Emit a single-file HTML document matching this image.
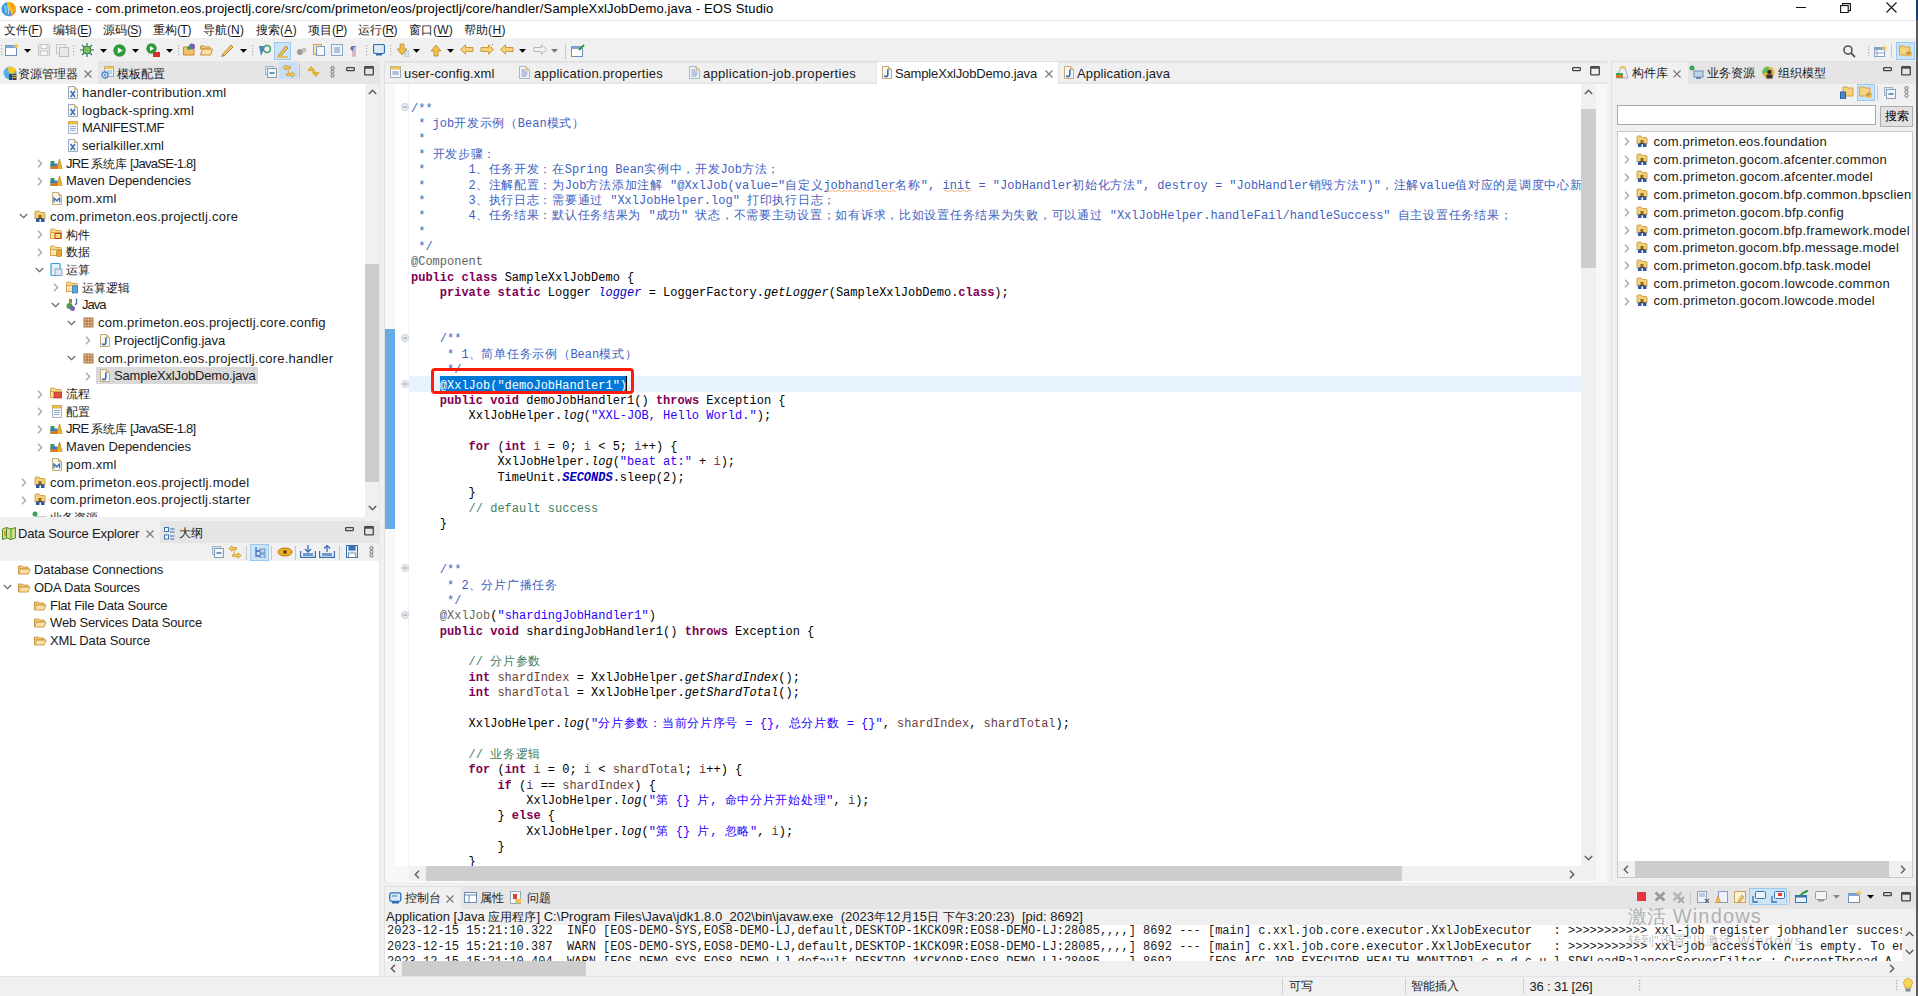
<!DOCTYPE html><html><head><meta charset="utf-8"><style>html,body{margin:0;padding:0;width:1918px;height:996px;overflow:hidden;background:#f0f0f0;font-family:"Liberation Sans",sans-serif}div{position:absolute;box-sizing:border-box}.tx{white-space:pre}.cd{position:absolute;white-space:pre;font-family:"Liberation Mono",monospace;font-size:12px;color:#000}.kw{color:#7f0055;font-weight:bold}.st{color:#2a00ff}.jd{color:#3f5fbf}.cm{color:#3f7f5f}.an{color:#646464}.cj{letter-spacing:0.72px}.lv{color:#6a3e3e}.sf{color:#0000c0;font-style:italic}.it{font-style:italic}</style></head><body><div style="left:0px;top:0px;width:1918px;height:20px;background:#ffffff;"></div><div style="left:0px;top:20px;width:1916px;height:1px;background:#e6e6e6;"></div><div style="left:0px;top:21px;width:1916px;height:17px;background:#ffffff;"></div><svg style="position:absolute;left:1px;top:1px;" width="16" height="16" viewBox="0 0 16 16"><circle cx="8" cy="8" r="7.2" fill="#f7c21c"/><path d="M6 0.9 A7.2 7.2 0 0 0 9.5 15.1 Q11 11.5 8.5 8.5 Q5.5 5 6 0.9Z" fill="#3f9de4"/><path d="M3.5 4.5 Q6 8 5 12 M6.5 5 Q8.5 8.5 7.5 13" stroke="#d8ecfb" stroke-width="0.9" fill="none"/><path d="M8.5 2 Q11 5 12.5 9 M10.5 2.5 Q13 5 14 8" stroke="#f08c10" stroke-width="1.1" fill="none"/><path d="M9.5 15 Q13 13 14.5 9.5" stroke="#f07a30" stroke-width="1.2" fill="none"/></svg><div id="t0" class="tx" style="left:20px;top:0.30px;line-height:17px;font-size:13px;color:#000;font-weight:normal;font-family:'Liberation Sans',sans-serif;letter-spacing:0.153px;">workspace - com.primeton.eos.projectlj.core/src/com/primeton/eos/projectlj/core/handler/SampleXxlJobDemo.java - EOS Studio</div><div style="left:1796px;top:7px;width:10px;height:1.2px;background:#111;"></div><svg style="position:absolute;left:1840px;top:3px;" width="11" height="10" viewBox="0 0 11 10"><rect x="0.6" y="2.6" width="7.6" height="7" fill="none" stroke="#111" stroke-width="1.1"/><path d="M2.6 2.6 V0.6 H10.4 V7.6 H8.2" fill="none" stroke="#111" stroke-width="1.1"/></svg><svg style="position:absolute;left:1886px;top:2px;" width="11" height="11" viewBox="0 0 11 11"><path d="M0.5 0.5 L10.5 10.5 M10.5 0.5 L0.5 10.5" stroke="#111" stroke-width="1.1"/></svg><div style="left:1916px;top:0px;width:2px;height:20px;background:#1c3b6e;"></div><div style="left:1916px;top:20px;width:2px;height:976px;background:#5c5c5c;"></div><div id="t1" class="tx" style="left:4px;top:21.70px;line-height:17px;font-size:12px;color:#1a1a1a;font-weight:normal;font-family:'Liberation Sans',sans-serif;letter-spacing:-0.448px;"><span style="font-size:12px;letter-spacing:0">文件</span>(<u style="text-underline-offset:1.5px;text-decoration-thickness:1px">F</u>)</div><div id="t2" class="tx" style="left:53px;top:21.70px;line-height:17px;font-size:12px;color:#1a1a1a;font-weight:normal;font-family:'Liberation Sans',sans-serif;letter-spacing:-0.672px;"><span style="font-size:12px;letter-spacing:0">编辑</span>(<u style="text-underline-offset:1.5px;text-decoration-thickness:1px">E</u>)</div><div id="t3" class="tx" style="left:103px;top:21.70px;line-height:17px;font-size:12px;color:#1a1a1a;font-weight:normal;font-family:'Liberation Sans',sans-serif;letter-spacing:-0.672px;"><span style="font-size:12px;letter-spacing:0">源码</span>(<u style="text-underline-offset:1.5px;text-decoration-thickness:1px">S</u>)</div><div id="t4" class="tx" style="left:153px;top:21.70px;line-height:17px;font-size:12px;color:#1a1a1a;font-weight:normal;font-family:'Liberation Sans',sans-serif;letter-spacing:-0.448px;"><span style="font-size:12px;letter-spacing:0">重构</span>(<u style="text-underline-offset:1.5px;text-decoration-thickness:1px">T</u>)</div><div id="t5" class="tx" style="left:203px;top:21.70px;line-height:17px;font-size:12px;color:#1a1a1a;font-weight:normal;font-family:'Liberation Sans',sans-serif;letter-spacing:0.109px;"><span style="font-size:12px;letter-spacing:0">导航</span>(<u style="text-underline-offset:1.5px;text-decoration-thickness:1px">N</u>)</div><div id="t6" class="tx" style="left:256px;top:21.70px;line-height:17px;font-size:12px;color:#1a1a1a;font-weight:normal;font-family:'Liberation Sans',sans-serif;letter-spacing:0.328px;"><span style="font-size:12px;letter-spacing:0">搜索</span>(<u style="text-underline-offset:1.5px;text-decoration-thickness:1px">A</u>)</div><div id="t7" class="tx" style="left:308px;top:21.70px;line-height:17px;font-size:12px;color:#1a1a1a;font-weight:normal;font-family:'Liberation Sans',sans-serif;letter-spacing:-0.339px;"><span style="font-size:12px;letter-spacing:0">项目</span>(<u style="text-underline-offset:1.5px;text-decoration-thickness:1px">P</u>)</div><div id="t8" class="tx" style="left:358px;top:21.70px;line-height:17px;font-size:12px;color:#1a1a1a;font-weight:normal;font-family:'Liberation Sans',sans-serif;letter-spacing:-0.557px;"><span style="font-size:12px;letter-spacing:0">运行</span>(<u style="text-underline-offset:1.5px;text-decoration-thickness:1px">R</u>)</div><div id="t9" class="tx" style="left:409px;top:21.70px;line-height:17px;font-size:12px;color:#1a1a1a;font-weight:normal;font-family:'Liberation Sans',sans-serif;letter-spacing:0.224px;"><span style="font-size:12px;letter-spacing:0">窗口</span>(<u style="text-underline-offset:1.5px;text-decoration-thickness:1px">W</u>)</div><div id="t10" class="tx" style="left:464px;top:21.70px;line-height:17px;font-size:12px;color:#1a1a1a;font-weight:normal;font-family:'Liberation Sans',sans-serif;letter-spacing:0.443px;"><span style="font-size:12px;letter-spacing:0">帮助</span>(<u style="text-underline-offset:1.5px;text-decoration-thickness:1px">H</u>)</div><div style="left:0px;top:38px;width:1916px;height:23px;background:#f0f0f0;"></div><div style="left:0;top:1px;width:1918px;height:0"><svg style="position:absolute;left:1px;top:44px;" width="2" height="12" viewBox="0 0 2 12"><rect x="0" y="0" width="1.2" height="1.2" fill="#b0b0b0"/><rect x="0" y="3" width="1.2" height="1.2" fill="#b0b0b0"/><rect x="0" y="6" width="1.2" height="1.2" fill="#b0b0b0"/><rect x="0" y="9" width="1.2" height="1.2" fill="#b0b0b0"/></svg><svg style="position:absolute;left:5px;top:42px;" width="14" height="14" viewBox="0 0 14 14"><rect x="0.5" y="2.5" width="11" height="10" fill="#fff" stroke="#6d8fb8"/><rect x="0.5" y="2.5" width="11" height="2.5" fill="#7fa6d6"/><path d="M11 0 L12 2 L14 3 L12 4 L11 6 L10 4 L8 3 L10 2Z" fill="#f5c242"/></svg><svg style="position:absolute;left:24px;top:47.5px;" width="8" height="4" viewBox="0 0 8 4"><path d="M0 0 H7 L3.5 3.8 Z" fill="#000"/></svg><svg style="position:absolute;left:38px;top:43px;" width="12" height="12" viewBox="0 0 12 12"><rect x="0.5" y="0.5" width="11" height="11" rx="1" fill="#e9e9e9" stroke="#bdbdbd"/><rect x="3" y="0.5" width="6" height="4" fill="#f7f7f7" stroke="#c8c8c8"/><rect x="2.5" y="7" width="7" height="4.5" fill="#f5f5f5" stroke="#c8c8c8"/></svg><svg style="position:absolute;left:56px;top:43px;" width="13" height="13" viewBox="0 0 13 13"><rect x="0.5" y="0.5" width="9" height="9" fill="#eee" stroke="#c8c8c8"/><rect x="3.5" y="3.5" width="9" height="9" fill="#e9e9e9" stroke="#bdbdbd"/></svg><svg style="position:absolute;left:73px;top:44px;" width="2" height="12" viewBox="0 0 2 12"><rect x="0" y="0" width="1.2" height="1.2" fill="#b0b0b0"/><rect x="0" y="3" width="1.2" height="1.2" fill="#b0b0b0"/><rect x="0" y="6" width="1.2" height="1.2" fill="#b0b0b0"/><rect x="0" y="9" width="1.2" height="1.2" fill="#b0b0b0"/></svg><svg style="position:absolute;left:80px;top:42px;" width="14" height="14" viewBox="0 0 14 14"><circle cx="7" cy="7" r="4" fill="#7dbf5e" stroke="#2f7a4a"/><path d="M7 0 V3 M7 11 V14 M0 7 H3 M11 7 H14 M2 2 L4 4 M12 2 L10 4 M2 12 L4 10 M12 12 L10 10" stroke="#2f7a6a" stroke-width="1.2"/></svg><svg style="position:absolute;left:100px;top:47.5px;" width="8" height="4" viewBox="0 0 8 4"><path d="M0 0 H7 L3.5 3.8 Z" fill="#000"/></svg><svg style="position:absolute;left:113px;top:43px;" width="13" height="13" viewBox="0 0 13 13"><circle cx="6.5" cy="6.5" r="6.2" fill="#2e9b3a"/><path d="M4.8 3.5 L9.8 6.5 L4.8 9.5Z" fill="#fff"/></svg><svg style="position:absolute;left:132px;top:47.5px;" width="8" height="4" viewBox="0 0 8 4"><path d="M0 0 H7 L3.5 3.8 Z" fill="#000"/></svg><svg style="position:absolute;left:146px;top:42px;" width="14" height="14" viewBox="0 0 14 14"><circle cx="5.5" cy="5.5" r="5.2" fill="#2e9b3a"/><path d="M4 3 L8 5.5 L4 8Z" fill="#fff"/><rect x="7" y="9" width="7" height="5" fill="#d32f2f"/></svg><svg style="position:absolute;left:166px;top:47.5px;" width="8" height="4" viewBox="0 0 8 4"><path d="M0 0 H7 L3.5 3.8 Z" fill="#000"/></svg><svg style="position:absolute;left:178px;top:44px;" width="2" height="12" viewBox="0 0 2 12"><rect x="0" y="0" width="1.2" height="1.2" fill="#b0b0b0"/><rect x="0" y="3" width="1.2" height="1.2" fill="#b0b0b0"/><rect x="0" y="6" width="1.2" height="1.2" fill="#b0b0b0"/><rect x="0" y="9" width="1.2" height="1.2" fill="#b0b0b0"/></svg><svg style="position:absolute;left:183px;top:42px;" width="14" height="13" viewBox="0 0 14 13"><path d="M0.5 4 H5 L6 5 H11 V12 H0.5Z" fill="#f4c06a" stroke="#c98a2a"/><circle cx="9" cy="3.5" r="3" fill="#7a5fb0"/><circle cx="6" cy="5" r="2" fill="#3aa060"/></svg><svg style="position:absolute;left:200px;top:43px;" width="13" height="12" viewBox="0 0 13 12"><path d="M0.5 2 H4.5 L5.5 3 H10 V5 H0.5Z" fill="#f4c878" stroke="#c9913a"/><path d="M0.5 11 L2.5 5 H12.5 L10.5 11Z" fill="#fbe0a6" stroke="#c9913a"/></svg><svg style="position:absolute;left:220px;top:42px;" width="15" height="14" viewBox="0 0 15 14"><path d="M2 12 L11 2 L13 4 L4 13Z" fill="#f3c56a" stroke="#b8862a"/><path d="M2 12 L1 14 L4 13Z" fill="#777"/></svg><svg style="position:absolute;left:240px;top:47.5px;" width="8" height="4" viewBox="0 0 8 4"><path d="M0 0 H7 L3.5 3.8 Z" fill="#000"/></svg><svg style="position:absolute;left:252px;top:44px;" width="2" height="12" viewBox="0 0 2 12"><rect x="0" y="0" width="1.2" height="1.2" fill="#b0b0b0"/><rect x="0" y="3" width="1.2" height="1.2" fill="#b0b0b0"/><rect x="0" y="6" width="1.2" height="1.2" fill="#b0b0b0"/><rect x="0" y="9" width="1.2" height="1.2" fill="#b0b0b0"/></svg><svg style="position:absolute;left:258px;top:42px;" width="13" height="14" viewBox="0 0 13 14"><path d="M1 3 H7 L3 13Z" fill="#4f7fbf"/><circle cx="9" cy="6" r="3.5" fill="none" stroke="#3aa060" stroke-width="1.6"/></svg><div style="left:274px;top:41px;width:17px;height:18px;background:#cce4f7;border:1px solid #99c9ef"></div><svg style="position:absolute;left:276px;top:43px;" width="13" height="14" viewBox="0 0 13 14"><path d="M2 12 L10 2 L12 4 L4 13Z" fill="#f3c56a" stroke="#b8862a"/><path d="M1 13 H12" stroke="#f3b33a" stroke-width="1.5"/></svg><svg style="position:absolute;left:296px;top:45px;" width="11" height="10" viewBox="0 0 11 10"><circle cx="4" cy="6" r="3" fill="#9a9a9a"/><circle cx="8" cy="4" r="2.5" fill="#c0c0c0"/></svg><svg style="position:absolute;left:313px;top:43px;" width="12" height="12" viewBox="0 0 12 12"><rect x="0.5" y="0.5" width="8" height="10" fill="#fbe6a8" stroke="#c9a15a"/><rect x="3.5" y="2.5" width="8" height="9" fill="#f7f7f7" stroke="#7a9cc6"/></svg><svg style="position:absolute;left:331px;top:43px;" width="12" height="12" viewBox="0 0 12 12"><rect x="0.5" y="0.5" width="11" height="11" fill="#eef3fa" stroke="#8aa5c8"/><path d="M3 4 H9 M3 6 H9 M3 8 H9" stroke="#7a8fb0"/></svg><div id="t11" class="tx" style="left:350px;top:41.50px;line-height:17px;font-size:12px;color:#4a6fa8;font-weight:normal;font-family:'Liberation Sans',sans-serif;">¶</div><svg style="position:absolute;left:366px;top:44px;" width="2" height="12" viewBox="0 0 2 12"><rect x="0" y="0" width="1.2" height="1.2" fill="#b0b0b0"/><rect x="0" y="3" width="1.2" height="1.2" fill="#b0b0b0"/><rect x="0" y="6" width="1.2" height="1.2" fill="#b0b0b0"/><rect x="0" y="9" width="1.2" height="1.2" fill="#b0b0b0"/></svg><svg style="position:absolute;left:373px;top:43px;" width="12" height="12" viewBox="0 0 12 12"><rect x="0.5" y="0.5" width="11" height="9" rx="1.5" fill="#dbe9f7" stroke="#2f6db3" stroke-width="1.2"/><rect x="3" y="10" width="6" height="1.5" fill="#2f6db3"/></svg><svg style="position:absolute;left:390px;top:44px;" width="2" height="12" viewBox="0 0 2 12"><rect x="0" y="0" width="1.2" height="1.2" fill="#b0b0b0"/><rect x="0" y="3" width="1.2" height="1.2" fill="#b0b0b0"/><rect x="0" y="6" width="1.2" height="1.2" fill="#b0b0b0"/><rect x="0" y="9" width="1.2" height="1.2" fill="#b0b0b0"/></svg><svg style="position:absolute;left:396px;top:42px;" width="13" height="14" viewBox="0 0 13 14"><path d="M4 1 H8 V6 H11 L6 12 L1 6 H4Z" fill="#f3c04a" stroke="#b8862a" stroke-width="0.8"/><rect x="9" y="8" width="4" height="6" fill="#dfe6ef" stroke="#8aa0c0" stroke-width="0.6"/></svg><svg style="position:absolute;left:413px;top:47.5px;" width="8" height="4" viewBox="0 0 8 4"><path d="M0 0 H7 L3.5 3.8 Z" fill="#000"/></svg><svg style="position:absolute;left:430px;top:42px;" width="12" height="14" viewBox="0 0 12 14"><path d="M4 13 H8 V8 H11 L6 2 L1 8 H4Z" fill="#f3c04a" stroke="#b8862a" stroke-width="0.8"/></svg><svg style="position:absolute;left:447px;top:47.5px;" width="8" height="4" viewBox="0 0 8 4"><path d="M0 0 H7 L3.5 3.8 Z" fill="#000"/></svg><svg style="position:absolute;left:460px;top:43px;" width="14" height="11" viewBox="0 0 14 11"><path d="M0.5 5.5 L5.5 0.8 V3.5 H13 V7.5 H5.5 V10.2Z" fill="#f7d27a" stroke="#c99a3a"/></svg><svg style="position:absolute;left:480px;top:43px;" width="14" height="11" viewBox="0 0 14 11"><path d="M13.5 5.5 L8.5 0.8 V3.5 H1 V7.5 H8.5 V10.2Z" fill="#f7d27a" stroke="#c99a3a"/><path d="M12 0 L13 1" stroke="#666"/></svg><svg style="position:absolute;left:500px;top:43px;" width="14" height="11" viewBox="0 0 14 11"><path d="M0.5 5.5 L5.5 0.8 V3.5 H13 V7.5 H5.5 V10.2Z" fill="#f7d27a" stroke="#c99a3a"/></svg><svg style="position:absolute;left:519px;top:47.5px;" width="8" height="4" viewBox="0 0 8 4"><path d="M0 0 H7 L3.5 3.8 Z" fill="#000"/></svg><svg style="position:absolute;left:533px;top:43px;" width="14" height="11" viewBox="0 0 14 11"><path d="M13.5 5.5 L8.5 0.8 V3.5 H1 V7.5 H8.5 V10.2Z" fill="#f3f3f3" stroke="#b5b5b5"/></svg><svg style="position:absolute;left:551px;top:47.5px;" width="8" height="4" viewBox="0 0 8 4"><path d="M0 0 H7 L3.5 3.8 Z" fill="#777"/></svg><div style="left:565px;top:43px;width:1px;height:15px;background:#c8c8c8;"></div><svg style="position:absolute;left:571px;top:43px;" width="14" height="13" viewBox="0 0 14 13"><rect x="0.5" y="2.5" width="11" height="10" fill="#fff" stroke="#6d8fb8"/><rect x="0.5" y="2.5" width="11" height="2.5" fill="#7fa6d6"/><path d="M8 6 L13 1" stroke="#2e9b3a" stroke-width="2"/></svg><svg style="position:absolute;left:1843px;top:44px;" width="13" height="13" viewBox="0 0 13 13"><circle cx="5" cy="5" r="4" fill="none" stroke="#555" stroke-width="1.6"/><path d="M8 8 L12 12" stroke="#555" stroke-width="1.8"/></svg><svg style="position:absolute;left:1868px;top:45px;" width="2" height="12" viewBox="0 0 2 12"><rect x="0" y="0" width="1.2" height="1.2" fill="#b0b0b0"/><rect x="0" y="3" width="1.2" height="1.2" fill="#b0b0b0"/><rect x="0" y="6" width="1.2" height="1.2" fill="#b0b0b0"/><rect x="0" y="9" width="1.2" height="1.2" fill="#b0b0b0"/></svg><svg style="position:absolute;left:1874px;top:44px;" width="13" height="12" viewBox="0 0 13 12"><rect x="0.5" y="2.5" width="10" height="9" fill="#fff" stroke="#8aa0c0"/><rect x="0.5" y="2.5" width="10" height="2.5" fill="#7fa6d6"/><path d="M3 5 V11.5 M0.5 8 H10.5" stroke="#8aa0c0"/><path d="M10 0 L11 2 L13 3 L11 4 L10 6 L9 4 L7 3 L9 2Z" fill="#f5c242"/></svg><div style="left:1891px;top:43px;width:1px;height:14px;background:#c8c8c8;"></div><div style="left:1896px;top:41px;width:19px;height:18px;background:#cce4f7;border:1px solid #99c9ef"></div><svg style="position:absolute;left:1899px;top:43px;" width="14" height="13" viewBox="0 0 14 13"><path d="M0.5 2 H5 L6 3 H11 V11 H0.5Z" fill="#f7d27a" stroke="#d0a04a"/><circle cx="10" cy="9.5" r="3" fill="#f3b33a"/><path d="M8 10 Q9 8 11 9" stroke="#3a8ad8" stroke-width="1.2" fill="none"/></svg></div><div style="left:0px;top:61px;width:1916px;height:915px;background:#f0f0f0;"></div><div style="left:0px;top:61px;width:380px;height:456px;background:#ffffff;"></div><div style="left:0px;top:61px;width:380px;height:23px;background:#e5e5e5;"></div><div style="left:0px;top:61px;width:98px;height:23px;background:#f0f0f0;"></div><svg style="position:absolute;left:2px;top:65px;" width="15" height="15" viewBox="0 0 15 15"><circle cx="8" cy="8" r="6.5" fill="#5aaee8"/><path d="M6 2 Q11 1 14 5 Q13 9 9 9 Q6 8 6 2Z" fill="#f8c81a"/><rect x="7" y="9" width="3" height="6" fill="#2a4a7a"/><rect x="10.5" y="9" width="4" height="6" fill="#3a3a3a"/><path d="M10.5 10.5 H14.5 M10.5 12.5 H14.5" stroke="#f2d24c" stroke-width="0.9"/></svg><div id="t12" class="tx" style="left:18px;top:65.50px;line-height:17px;font-size:12px;color:#1a1a1a;font-weight:normal;font-family:'Liberation Sans',sans-serif;"><span style="font-size:12px;letter-spacing:0">资源管理器</span></div><svg style="position:absolute;left:84px;top:70.0px;" width="8" height="8" viewBox="0 0 8 8"><path d="M0.5 0.5 L7.5 7.5 M7.5 0.5 L0.5 7.5" stroke="#7a7a7a" stroke-width="1.2"/></svg><svg style="position:absolute;left:101px;top:66px;" width="13" height="13" viewBox="0 0 13 13"><rect x="3.5" y="0.5" width="9" height="10" fill="#e8f3fb" stroke="#9aa8b8"/><rect x="3.5" y="0.5" width="9" height="2.5" fill="#f2c24c"/><path d="M6 5 H11 M6 7 H11" stroke="#8fb0d0"/><circle cx="4" cy="9" r="3" fill="#cfe2f5" stroke="#4a86c8" stroke-width="1.3"/><circle cx="4" cy="9" r="1" fill="#4a86c8"/></svg><div id="t13" class="tx" style="left:117px;top:65.50px;line-height:17px;font-size:12px;color:#1a1a1a;font-weight:normal;font-family:'Liberation Sans',sans-serif;"><span style="font-size:12px;letter-spacing:0">模板配置</span></div><svg style="position:absolute;left:265px;top:66px;" width="12" height="12" viewBox="0 0 12 12"><rect x="0.5" y="0.5" width="8" height="8" fill="#dce8f4" stroke="#9fb3cc" stroke-width="1"/><rect x="2.5" y="2.5" width="9" height="9" fill="#eef6fc" stroke="#8d9bb0" stroke-width="1"/><path d="M4.5 7 H9.5" stroke="#4f7fb0" stroke-width="1.6"/></svg><div style="left:279px;top:62px;width:19px;height:17px;background:#c5e0f8;"></div><svg style="position:absolute;left:282px;top:64px;" width="14" height="14" viewBox="0 0 14 14"><path d="M0.8 3.5 L4 0.8 V2.5 H8.5 V4.5 H4 V6.2Z" fill="#f6c86a" stroke="#d39a2a" stroke-width="0.8"/><path d="M13.2 10.5 L10 7.8 V9.5 H4.5 V11.5 H10 V13.2Z" fill="#f6c86a" stroke="#d39a2a" stroke-width="0.8"/><path d="M6 4.5 L6.5 9.5" stroke="#e0a840" stroke-width="1"/></svg><div style="left:299px;top:64px;width:1px;height:14px;background:#c0c0c0;"></div><svg style="position:absolute;left:307px;top:65px;" width="13" height="13" viewBox="0 0 13 13"><path d="M0.8 5.5 L4 1.5 L6.5 4 L5 5.5 Z" fill="#f3c44a" stroke="#c99a20" stroke-width="0.7"/><path d="M3.5 3 L8 6.5" stroke="#e3b030" stroke-width="2"/><path d="M12.2 7.5 L9 11.5 L6.5 9 L8 7.5 Z" fill="#f3c44a" stroke="#c99a20" stroke-width="0.7"/><path d="M9.5 10 L5 6.5" stroke="#e3b030" stroke-width="2"/></svg><svg style="position:absolute;left:330px;top:66px;" width="5" height="12" viewBox="0 0 5 12"><circle cx="2.5" cy="2.0" r="1.6" fill="none" stroke="#6a6a6a" stroke-width="0.9"/><circle cx="2.5" cy="5.8" r="1.6" fill="none" stroke="#6a6a6a" stroke-width="0.9"/><circle cx="2.5" cy="9.6" r="1.6" fill="none" stroke="#6a6a6a" stroke-width="0.9"/></svg><svg style="position:absolute;left:346px;top:67px;" width="9" height="5" viewBox="0 0 9 5"><rect x="0.7" y="0.7" width="7.6" height="3" rx="0.6" fill="none" stroke="#444" stroke-width="1.3"/></svg><svg style="position:absolute;left:364px;top:66px;" width="10" height="10" viewBox="0 0 10 10"><rect x="0.7" y="0.7" width="8.6" height="8.2" rx="0.6" fill="none" stroke="#444" stroke-width="1.3"/><path d="M0.8 1.9 H9.2" stroke="#444" stroke-width="1.6"/></svg><div style="left:96px;top:367px;width:162px;height:17px;background:#d9d9d9;"></div><svg style="position:absolute;left:67px;top:85.8px;" width="12" height="13" viewBox="0 0 12 13"><path d="M1.5 0.5 H7.5 L10.5 3.5 V12.5 H1.5 Z" fill="#f4f7fb" stroke="#9aa8b8" stroke-width="1"/><path d="M7.5 0.5 V3.5 H10.5" fill="#e8c27a" stroke="#c9a15a" stroke-width="0.8"/><path d="M3.6 5 L8 11 M8 5 L3.6 11" stroke="#3a6fb0" stroke-width="1.5"/></svg><div id="t14" class="tx" style="left:82px;top:83.80px;line-height:17px;font-size:13px;color:#1a1a1a;font-weight:normal;font-family:'Liberation Sans',sans-serif;letter-spacing:0.240px;">handler-contribution.xml</div><svg style="position:absolute;left:67px;top:103.52px;" width="12" height="13" viewBox="0 0 12 13"><path d="M1.5 0.5 H7.5 L10.5 3.5 V12.5 H1.5 Z" fill="#f4f7fb" stroke="#9aa8b8" stroke-width="1"/><path d="M7.5 0.5 V3.5 H10.5" fill="#e8c27a" stroke="#c9a15a" stroke-width="0.8"/><path d="M3.6 5 L8 11 M8 5 L3.6 11" stroke="#3a6fb0" stroke-width="1.5"/></svg><div id="t15" class="tx" style="left:82px;top:101.52px;line-height:17px;font-size:13px;color:#1a1a1a;font-weight:normal;font-family:'Liberation Sans',sans-serif;letter-spacing:0.201px;">logback-spring.xml</div><svg style="position:absolute;left:67px;top:121.24px;" width="12" height="13" viewBox="0 0 12 13"><rect x="1.5" y="0.5" width="9" height="12" fill="#f4f7fb" stroke="#a8b4c4"/><rect x="1.5" y="0.5" width="9" height="2.5" fill="#f2c24c" stroke="#d0a030" stroke-width="0.6"/><path d="M3 5.5 H9 M3 7.5 H9 M3 9.5 H8" stroke="#8aa0c0" stroke-width="0.9"/></svg><div id="t16" class="tx" style="left:82px;top:119.24px;line-height:17px;font-size:13px;color:#1a1a1a;font-weight:normal;font-family:'Liberation Sans',sans-serif;letter-spacing:-0.425px;">MANIFEST.MF</div><svg style="position:absolute;left:67px;top:138.95999999999998px;" width="12" height="13" viewBox="0 0 12 13"><path d="M1.5 0.5 H7.5 L10.5 3.5 V12.5 H1.5 Z" fill="#f4f7fb" stroke="#9aa8b8" stroke-width="1"/><path d="M7.5 0.5 V3.5 H10.5" fill="#e8c27a" stroke="#c9a15a" stroke-width="0.8"/><path d="M3.6 5 L8 11 M8 5 L3.6 11" stroke="#3a6fb0" stroke-width="1.5"/></svg><div id="t17" class="tx" style="left:82px;top:136.96px;line-height:17px;font-size:13px;color:#1a1a1a;font-weight:normal;font-family:'Liberation Sans',sans-serif;letter-spacing:0.068px;">serialkiller.xml</div><svg style="position:absolute;left:37.3px;top:159.18px;" width="6" height="9" viewBox="0 0 6 9"><path d="M1 0.8 L4.6 4.5 L1 8.2" stroke="#a6a6a6" stroke-width="1.3" fill="none"/></svg><svg style="position:absolute;left:50px;top:157.68px;" width="13" height="12" viewBox="0 0 13 12"><rect x="0.5" y="3" width="4" height="8" fill="#3a9a5a"/><rect x="0.5" y="8" width="8" height="3" fill="#d07a2a"/><rect x="0.5" y="5.5" width="7" height="2.5" fill="#3a7ab8"/><path d="M7 11 L9.5 1 L12 11" fill="#f0b030" stroke="#c08010" stroke-width="0.8"/></svg><div id="t18" class="tx" style="left:66px;top:154.68px;line-height:17px;font-size:13px;color:#1a1a1a;font-weight:normal;font-family:'Liberation Sans',sans-serif;letter-spacing:-0.754px;">JRE <span style="font-size:12px;letter-spacing:0">系统库</span> [JavaSE-1.8]</div><svg style="position:absolute;left:37.3px;top:176.89999999999998px;" width="6" height="9" viewBox="0 0 6 9"><path d="M1 0.8 L4.6 4.5 L1 8.2" stroke="#a6a6a6" stroke-width="1.3" fill="none"/></svg><svg style="position:absolute;left:50px;top:175.39999999999998px;" width="13" height="12" viewBox="0 0 13 12"><rect x="0.5" y="3" width="4" height="8" fill="#3a9a5a"/><rect x="0.5" y="8" width="8" height="3" fill="#d07a2a"/><rect x="0.5" y="5.5" width="7" height="2.5" fill="#3a7ab8"/><path d="M7 11 L9.5 1 L12 11" fill="#f0b030" stroke="#c08010" stroke-width="0.8"/></svg><div id="t19" class="tx" style="left:66px;top:172.40px;line-height:17px;font-size:13px;color:#1a1a1a;font-weight:normal;font-family:'Liberation Sans',sans-serif;letter-spacing:-0.042px;">Maven Dependencies</div><svg style="position:absolute;left:51px;top:192.12px;" width="12" height="13" viewBox="0 0 12 13"><path d="M1.5 0.5 H7.5 L10.5 3.5 V12.5 H1.5 Z" fill="#f4f7fb" stroke="#c4ab74" stroke-width="1"/><path d="M7.5 0.5 V3.5 H10.5" fill="#e8c27a" stroke="#c9a15a" stroke-width="0.8"/><path d="M3 10.5 V6 L5.8 8.8 L8.6 6 V10.5" stroke="#3a6fb0" stroke-width="1.3" fill="none"/></svg><div id="t20" class="tx" style="left:66px;top:190.12px;line-height:17px;font-size:13px;color:#1a1a1a;font-weight:normal;font-family:'Liberation Sans',sans-serif;letter-spacing:0.225px;">pom.xml</div><svg style="position:absolute;left:19px;top:213.33999999999997px;" width="9" height="6" viewBox="0 0 9 6"><path d="M0.8 1 L4.5 4.6 L8.2 1" stroke="#6a6a6a" stroke-width="1.3" fill="none"/></svg><svg style="position:absolute;left:34px;top:209.83999999999997px;" width="13" height="13" viewBox="0 0 13 13"><path d="M1 2 Q1 1 2 1 H5 L6.5 2.5 H10 Q11 2.5 11 3.5 V9 H1 Z" fill="#f3cf7a" stroke="#c99a3e" stroke-width="0.9"/><rect x="4.5" y="5" width="3" height="3" fill="#8c6a2a"/><rect x="2" y="8.5" width="3.5" height="3.5" fill="#3056a8"/><rect x="7" y="8.5" width="3.5" height="3.5" fill="#3056a8"/><path d="M6 8 V9 M3.7 8.5 H8.7" stroke="#3a3a3a" stroke-width="0.8"/></svg><div id="t21" class="tx" style="left:50px;top:207.84px;line-height:17px;font-size:13px;color:#1a1a1a;font-weight:normal;font-family:'Liberation Sans',sans-serif;letter-spacing:0.244px;">com.primeton.eos.projectlj.core</div><svg style="position:absolute;left:37.3px;top:230.06px;" width="6" height="9" viewBox="0 0 6 9"><path d="M1 0.8 L4.6 4.5 L1 8.2" stroke="#a6a6a6" stroke-width="1.3" fill="none"/></svg><svg style="position:absolute;left:50px;top:227.56px;" width="13" height="13" viewBox="0 0 13 13"><path d="M0.5 2 Q0.5 1 1.5 1 H4.5 L5.8 2.5 H10.5 Q11.5 2.5 11.5 3.5 V10.5 H0.5 Z" fill="#f6d88b" stroke="#d0a04a" stroke-width="0.9"/><path d="M0.5 4.5 H11.5 V10.5 H0.5 Z" fill="#fbe6a8" stroke="#d0a04a" stroke-width="0.9"/><rect x="5" y="5.5" width="6" height="5" fill="#f5e36a" stroke="#c0392b" stroke-width="1"/></svg><div id="t22" class="tx" style="left:66px;top:225.56px;line-height:17px;font-size:13px;color:#1a1a1a;font-weight:normal;font-family:'Liberation Sans',sans-serif;"><span style="font-size:12px;letter-spacing:0">构件</span></div><svg style="position:absolute;left:37.3px;top:247.77999999999997px;" width="6" height="9" viewBox="0 0 6 9"><path d="M1 0.8 L4.6 4.5 L1 8.2" stroke="#a6a6a6" stroke-width="1.3" fill="none"/></svg><svg style="position:absolute;left:50px;top:245.27999999999997px;" width="13" height="13" viewBox="0 0 13 13"><path d="M0.5 2 Q0.5 1 1.5 1 H4.5 L5.8 2.5 H10.5 Q11.5 2.5 11.5 3.5 V10.5 H0.5 Z" fill="#f6d88b" stroke="#d0a04a" stroke-width="0.9"/><path d="M0.5 4.5 H11.5 V10.5 H0.5 Z" fill="#fbe6a8" stroke="#d0a04a" stroke-width="0.9"/><rect x="6.5" y="5.5" width="5" height="6" rx="1" fill="#e3a82b" stroke="#b07a10" stroke-width="0.7"/></svg><div id="t23" class="tx" style="left:66px;top:243.28px;line-height:17px;font-size:13px;color:#1a1a1a;font-weight:normal;font-family:'Liberation Sans',sans-serif;"><span style="font-size:12px;letter-spacing:0">数据</span></div><svg style="position:absolute;left:35px;top:266.5px;" width="9" height="6" viewBox="0 0 9 6"><path d="M0.8 1 L4.5 4.6 L8.2 1" stroke="#6a6a6a" stroke-width="1.3" fill="none"/></svg><svg style="position:absolute;left:50px;top:263.0px;" width="13" height="13" viewBox="0 0 13 13"><rect x="1" y="0.5" width="9" height="12" rx="1" fill="#e3f1fb" stroke="#3aa0d8" stroke-width="1.2"/><rect x="5" y="6" width="7" height="6.5" fill="#dfe6ef" stroke="#6b88b0" stroke-width="0.7"/></svg><div id="t24" class="tx" style="left:66px;top:261.00px;line-height:17px;font-size:13px;color:#1a1a1a;font-weight:normal;font-family:'Liberation Sans',sans-serif;"><span style="font-size:12px;letter-spacing:0">运算</span></div><svg style="position:absolute;left:53.3px;top:283.21999999999997px;" width="6" height="9" viewBox="0 0 6 9"><path d="M1 0.8 L4.6 4.5 L1 8.2" stroke="#a6a6a6" stroke-width="1.3" fill="none"/></svg><svg style="position:absolute;left:66px;top:280.71999999999997px;" width="13" height="13" viewBox="0 0 13 13"><path d="M0.5 2 Q0.5 1 1.5 1 H4.5 L5.8 2.5 H10.5 Q11.5 2.5 11.5 3.5 V10.5 H0.5 Z" fill="#f6d88b" stroke="#d0a04a" stroke-width="0.9"/><path d="M0.5 4.5 H11.5 V10.5 H0.5 Z" fill="#fbe6a8" stroke="#d0a04a" stroke-width="0.9"/><rect x="6.5" y="5" width="5" height="7" fill="#5aa7e8" stroke="#2f6fb3" stroke-width="0.7"/></svg><div id="t25" class="tx" style="left:82px;top:278.72px;line-height:17px;font-size:13px;color:#1a1a1a;font-weight:normal;font-family:'Liberation Sans',sans-serif;"><span style="font-size:12px;letter-spacing:0">运算逻辑</span></div><svg style="position:absolute;left:51px;top:301.94px;" width="9" height="6" viewBox="0 0 9 6"><path d="M0.8 1 L4.5 4.6 L8.2 1" stroke="#6a6a6a" stroke-width="1.3" fill="none"/></svg><svg style="position:absolute;left:66px;top:298.44px;" width="13" height="13" viewBox="0 0 13 13"><circle cx="3.5" cy="8" r="3" fill="#4f9a4a"/><circle cx="6.5" cy="10.5" r="2.5" fill="#7a5fb0"/><rect x="3" y="1" width="3" height="4" fill="#b07a4a"/><path d="M10.5 0.5 V5 Q10.5 6.5 9 6.5" stroke="#3a6fb0" stroke-width="1.3" fill="none"/></svg><div id="t26" class="tx" style="left:82px;top:296.44px;line-height:17px;font-size:13px;color:#1a1a1a;font-weight:normal;font-family:'Liberation Sans',sans-serif;letter-spacing:-0.992px;">Java</div><svg style="position:absolute;left:67px;top:319.65999999999997px;" width="9" height="6" viewBox="0 0 9 6"><path d="M0.8 1 L4.5 4.6 L8.2 1" stroke="#6a6a6a" stroke-width="1.3" fill="none"/></svg><svg style="position:absolute;left:83px;top:317.15999999999997px;" width="11" height="11" viewBox="0 0 11 11"><rect x="1" y="1" width="9" height="9" fill="#e9c59a" stroke="#a0683a" stroke-width="0.9"/><path d="M4 1 V10 M7 1 V10 M1 4 H10 M1 7 H10" stroke="#a0683a" stroke-width="0.9"/></svg><div id="t27" class="tx" style="left:98px;top:314.16px;line-height:17px;font-size:13px;color:#1a1a1a;font-weight:normal;font-family:'Liberation Sans',sans-serif;letter-spacing:0.233px;">com.primeton.eos.projectlj.core.config</div><svg style="position:absolute;left:85.3px;top:336.38px;" width="6" height="9" viewBox="0 0 6 9"><path d="M1 0.8 L4.6 4.5 L1 8.2" stroke="#a6a6a6" stroke-width="1.3" fill="none"/></svg><svg style="position:absolute;left:99px;top:333.88px;" width="12" height="13" viewBox="0 0 12 13"><path d="M1.5 0.5 H7.5 L10.5 3.5 V12.5 H1.5 Z" fill="#f4f7fb" stroke="#c4ab74" stroke-width="1"/><path d="M7.5 0.5 V3.5 H10.5" fill="#e8c27a" stroke="#c9a15a" stroke-width="0.8"/><path d="M6.8 3.5 V8.5 Q6.8 10.6 4.8 10.6 Q3.6 10.6 3.3 9.6" stroke="#3a6fb0" stroke-width="1.6" fill="none"/></svg><div id="t28" class="tx" style="left:114px;top:331.88px;line-height:17px;font-size:13px;color:#1a1a1a;font-weight:normal;font-family:'Liberation Sans',sans-serif;letter-spacing:0.001px;">ProjectljConfig.java</div><svg style="position:absolute;left:67px;top:355.09999999999997px;" width="9" height="6" viewBox="0 0 9 6"><path d="M0.8 1 L4.5 4.6 L8.2 1" stroke="#6a6a6a" stroke-width="1.3" fill="none"/></svg><svg style="position:absolute;left:83px;top:352.59999999999997px;" width="11" height="11" viewBox="0 0 11 11"><rect x="1" y="1" width="9" height="9" fill="#e9c59a" stroke="#a0683a" stroke-width="0.9"/><path d="M4 1 V10 M7 1 V10 M1 4 H10 M1 7 H10" stroke="#a0683a" stroke-width="0.9"/></svg><div id="t29" class="tx" style="left:98px;top:349.60px;line-height:17px;font-size:13px;color:#1a1a1a;font-weight:normal;font-family:'Liberation Sans',sans-serif;letter-spacing:0.197px;">com.primeton.eos.projectlj.core.handler</div><svg style="position:absolute;left:85.3px;top:371.82px;" width="6" height="9" viewBox="0 0 6 9"><path d="M1 0.8 L4.6 4.5 L1 8.2" stroke="#a6a6a6" stroke-width="1.3" fill="none"/></svg><svg style="position:absolute;left:99px;top:369.32px;" width="12" height="13" viewBox="0 0 12 13"><path d="M1.5 0.5 H7.5 L10.5 3.5 V12.5 H1.5 Z" fill="#f4f7fb" stroke="#c4ab74" stroke-width="1"/><path d="M7.5 0.5 V3.5 H10.5" fill="#e8c27a" stroke="#c9a15a" stroke-width="0.8"/><path d="M6.8 3.5 V8.5 Q6.8 10.6 4.8 10.6 Q3.6 10.6 3.3 9.6" stroke="#3a6fb0" stroke-width="1.6" fill="none"/></svg><div id="t30" class="tx" style="left:114px;top:367.32px;line-height:17px;font-size:13px;color:#1a1a1a;font-weight:normal;font-family:'Liberation Sans',sans-serif;letter-spacing:-0.173px;">SampleXxlJobDemo.java</div><svg style="position:absolute;left:37.3px;top:389.54px;" width="6" height="9" viewBox="0 0 6 9"><path d="M1 0.8 L4.6 4.5 L1 8.2" stroke="#a6a6a6" stroke-width="1.3" fill="none"/></svg><svg style="position:absolute;left:50px;top:387.04px;" width="13" height="13" viewBox="0 0 13 13"><path d="M0.5 2 Q0.5 1 1.5 1 H4.5 L5.8 2.5 H10.5 Q11.5 2.5 11.5 3.5 V10.5 H0.5 Z" fill="#f6d88b" stroke="#d0a04a" stroke-width="0.9"/><path d="M0.5 4.5 H11.5 V10.5 H0.5 Z" fill="#fbe6a8" stroke="#d0a04a" stroke-width="0.9"/><rect x="4" y="5.5" width="7.5" height="5.5" fill="#e74c3c" stroke="#a93226" stroke-width="0.7"/></svg><div id="t31" class="tx" style="left:66px;top:385.04px;line-height:17px;font-size:13px;color:#1a1a1a;font-weight:normal;font-family:'Liberation Sans',sans-serif;"><span style="font-size:12px;letter-spacing:0">流程</span></div><svg style="position:absolute;left:37.3px;top:407.26px;" width="6" height="9" viewBox="0 0 6 9"><path d="M1 0.8 L4.6 4.5 L1 8.2" stroke="#a6a6a6" stroke-width="1.3" fill="none"/></svg><svg style="position:absolute;left:51px;top:404.76px;" width="12" height="13" viewBox="0 0 12 13"><rect x="1.5" y="0.5" width="9" height="12" fill="#f4f7fb" stroke="#a8b4c4"/><rect x="1.5" y="0.5" width="9" height="2.5" fill="#f2c24c" stroke="#d0a030" stroke-width="0.6"/><path d="M3 5.5 H9 M3 7.5 H9 M3 9.5 H8" stroke="#8aa0c0" stroke-width="0.9"/></svg><div id="t32" class="tx" style="left:66px;top:402.76px;line-height:17px;font-size:13px;color:#1a1a1a;font-weight:normal;font-family:'Liberation Sans',sans-serif;"><span style="font-size:12px;letter-spacing:0">配置</span></div><svg style="position:absolute;left:37.3px;top:424.97999999999996px;" width="6" height="9" viewBox="0 0 6 9"><path d="M1 0.8 L4.6 4.5 L1 8.2" stroke="#a6a6a6" stroke-width="1.3" fill="none"/></svg><svg style="position:absolute;left:50px;top:423.47999999999996px;" width="13" height="12" viewBox="0 0 13 12"><rect x="0.5" y="3" width="4" height="8" fill="#3a9a5a"/><rect x="0.5" y="8" width="8" height="3" fill="#d07a2a"/><rect x="0.5" y="5.5" width="7" height="2.5" fill="#3a7ab8"/><path d="M7 11 L9.5 1 L12 11" fill="#f0b030" stroke="#c08010" stroke-width="0.8"/></svg><div id="t33" class="tx" style="left:66px;top:420.48px;line-height:17px;font-size:13px;color:#1a1a1a;font-weight:normal;font-family:'Liberation Sans',sans-serif;letter-spacing:-0.754px;">JRE <span style="font-size:12px;letter-spacing:0">系统库</span> [JavaSE-1.8]</div><svg style="position:absolute;left:37.3px;top:442.7px;" width="6" height="9" viewBox="0 0 6 9"><path d="M1 0.8 L4.6 4.5 L1 8.2" stroke="#a6a6a6" stroke-width="1.3" fill="none"/></svg><svg style="position:absolute;left:50px;top:441.2px;" width="13" height="12" viewBox="0 0 13 12"><rect x="0.5" y="3" width="4" height="8" fill="#3a9a5a"/><rect x="0.5" y="8" width="8" height="3" fill="#d07a2a"/><rect x="0.5" y="5.5" width="7" height="2.5" fill="#3a7ab8"/><path d="M7 11 L9.5 1 L12 11" fill="#f0b030" stroke="#c08010" stroke-width="0.8"/></svg><div id="t34" class="tx" style="left:66px;top:438.20px;line-height:17px;font-size:13px;color:#1a1a1a;font-weight:normal;font-family:'Liberation Sans',sans-serif;letter-spacing:-0.042px;">Maven Dependencies</div><svg style="position:absolute;left:51px;top:457.92px;" width="12" height="13" viewBox="0 0 12 13"><path d="M1.5 0.5 H7.5 L10.5 3.5 V12.5 H1.5 Z" fill="#f4f7fb" stroke="#c4ab74" stroke-width="1"/><path d="M7.5 0.5 V3.5 H10.5" fill="#e8c27a" stroke="#c9a15a" stroke-width="0.8"/><path d="M3 10.5 V6 L5.8 8.8 L8.6 6 V10.5" stroke="#3a6fb0" stroke-width="1.3" fill="none"/></svg><div id="t35" class="tx" style="left:66px;top:455.92px;line-height:17px;font-size:13px;color:#1a1a1a;font-weight:normal;font-family:'Liberation Sans',sans-serif;letter-spacing:0.225px;">pom.xml</div><svg style="position:absolute;left:21.3px;top:478.14px;" width="6" height="9" viewBox="0 0 6 9"><path d="M1 0.8 L4.6 4.5 L1 8.2" stroke="#a6a6a6" stroke-width="1.3" fill="none"/></svg><svg style="position:absolute;left:34px;top:475.64px;" width="13" height="13" viewBox="0 0 13 13"><path d="M1 2 Q1 1 2 1 H5 L6.5 2.5 H10 Q11 2.5 11 3.5 V9 H1 Z" fill="#f3cf7a" stroke="#c99a3e" stroke-width="0.9"/><rect x="4.5" y="5" width="3" height="3" fill="#8c6a2a"/><rect x="2" y="8.5" width="3.5" height="3.5" fill="#3056a8"/><rect x="7" y="8.5" width="3.5" height="3.5" fill="#3056a8"/><path d="M6 8 V9 M3.7 8.5 H8.7" stroke="#3a3a3a" stroke-width="0.8"/></svg><div id="t36" class="tx" style="left:50px;top:473.64px;line-height:17px;font-size:13px;color:#1a1a1a;font-weight:normal;font-family:'Liberation Sans',sans-serif;letter-spacing:0.270px;">com.primeton.eos.projectlj.model</div><svg style="position:absolute;left:21.3px;top:495.85999999999996px;" width="6" height="9" viewBox="0 0 6 9"><path d="M1 0.8 L4.6 4.5 L1 8.2" stroke="#a6a6a6" stroke-width="1.3" fill="none"/></svg><svg style="position:absolute;left:34px;top:493.35999999999996px;" width="13" height="13" viewBox="0 0 13 13"><path d="M1 2 Q1 1 2 1 H5 L6.5 2.5 H10 Q11 2.5 11 3.5 V9 H1 Z" fill="#f3cf7a" stroke="#c99a3e" stroke-width="0.9"/><rect x="4.5" y="5" width="3" height="3" fill="#8c6a2a"/><rect x="2" y="8.5" width="3.5" height="3.5" fill="#3056a8"/><rect x="7" y="8.5" width="3.5" height="3.5" fill="#3056a8"/><path d="M6 8 V9 M3.7 8.5 H8.7" stroke="#3a3a3a" stroke-width="0.8"/></svg><div id="t37" class="tx" style="left:50px;top:491.36px;line-height:17px;font-size:13px;color:#1a1a1a;font-weight:normal;font-family:'Liberation Sans',sans-serif;letter-spacing:0.247px;">com.primeton.eos.projectlj.starter</div><svg style="position:absolute;left:32px;top:511.0799999999999px;" width="15" height="13" viewBox="0 0 15 13"><circle cx="3" cy="3" r="2.5" fill="#3aa060"/><rect x="4" y="6" width="10" height="6" fill="#dfe6ef" stroke="#8aa0c0"/></svg><div id="t38" class="tx" style="left:50px;top:509.08px;line-height:17px;font-size:13px;color:#1a1a1a;font-weight:normal;font-family:'Liberation Sans',sans-serif;"><span style="font-size:12px;letter-spacing:0">业务资源</span></div><div style="left:365px;top:84px;width:15px;height:433px;background:#f0f0f0;"></div><div style="left:365px;top:264px;width:15px;height:218px;background:#cdcdcd;"></div><svg style="position:absolute;left:368px;top:89px;" width="9" height="6" viewBox="0 0 9 6"><path d="M0.8 5 L4.5 1.3 L8.2 5" stroke="#606060" stroke-width="1.5" fill="none"/></svg><svg style="position:absolute;left:368px;top:505px;" width="9" height="6" viewBox="0 0 9 6"><path d="M0.8 1 L4.5 4.7 L8.2 1" stroke="#606060" stroke-width="1.5" fill="none"/></svg><div style="left:0px;top:517px;width:380px;height:4px;background:#f0f0f0;"></div><div style="left:0px;top:521px;width:380px;height:455px;background:#ffffff;"></div><div style="left:0px;top:521px;width:380px;height:22px;background:#e5e5e5;"></div><div style="left:0px;top:521px;width:160px;height:22px;background:#f0f0f0;"></div><div style="left:0px;top:543px;width:380px;height:18px;background:#f0f0f0;"></div><svg style="position:absolute;left:2px;top:527px;" width="14" height="13" viewBox="0 0 14 13"><path d="M0.5 2 L4.5 0.5 L9 2 L13.5 0.5 V11 L9 12.5 L4.5 11 L0.5 12.5Z" fill="#c7e28a" stroke="#5a8a2a"/><path d="M4.5 0.5 V11 M9 2 V12.5" stroke="#5a8a2a"/><rect x="2" y="4" width="2" height="5" fill="#e0a020"/></svg><div id="t39" class="tx" style="left:18px;top:525.00px;line-height:17px;font-size:13px;color:#1a1a1a;font-weight:normal;font-family:'Liberation Sans',sans-serif;letter-spacing:-0.149px;">Data Source Explorer</div><svg style="position:absolute;left:146px;top:530.0px;" width="8" height="8" viewBox="0 0 8 8"><path d="M0.5 0.5 L7.5 7.5 M7.5 0.5 L0.5 7.5" stroke="#7a7a7a" stroke-width="1.2"/></svg><svg style="position:absolute;left:164px;top:527px;" width="11" height="13" viewBox="0 0 11 13"><rect x="0.5" y="0.5" width="4" height="4" fill="#fff" stroke="#3a6fb0"/><rect x="0.5" y="8" width="4" height="4" fill="#fff" stroke="#3a6fb0"/><path d="M6 2 H10.5 M6 5 H10.5 M6 9 H10.5 M6 12 H10.5" stroke="#3a6fb0"/></svg><div id="t40" class="tx" style="left:179px;top:525.00px;line-height:17px;font-size:12px;color:#1a1a1a;font-weight:normal;font-family:'Liberation Sans',sans-serif;"><span style="font-size:12px;letter-spacing:0">大纲</span></div><svg style="position:absolute;left:345px;top:527px;" width="9" height="5" viewBox="0 0 9 5"><rect x="0.7" y="0.7" width="7.6" height="3" rx="0.6" fill="none" stroke="#444" stroke-width="1.3"/></svg><svg style="position:absolute;left:364px;top:526px;" width="10" height="10" viewBox="0 0 10 10"><rect x="0.7" y="0.7" width="8.6" height="8.2" rx="0.6" fill="none" stroke="#444" stroke-width="1.3"/><path d="M0.8 1.9 H9.2" stroke="#444" stroke-width="1.6"/></svg><svg style="position:absolute;left:212px;top:546px;" width="12" height="12" viewBox="0 0 12 12"><rect x="0.5" y="0.5" width="8" height="8" fill="#dce8f4" stroke="#9fb3cc" stroke-width="1"/><rect x="2.5" y="2.5" width="9" height="9" fill="#eef6fc" stroke="#8d9bb0" stroke-width="1"/><path d="M4.5 7 H9.5" stroke="#4f7fb0" stroke-width="1.6"/></svg><svg style="position:absolute;left:228px;top:545px;" width="14" height="14" viewBox="0 0 14 14"><path d="M0.8 3.5 L4 0.8 V2.5 H8.5 V4.5 H4 V6.2Z" fill="#f6c86a" stroke="#d39a2a" stroke-width="0.8"/><path d="M13.2 10.5 L10 7.8 V9.5 H4.5 V11.5 H10 V13.2Z" fill="#f6c86a" stroke="#d39a2a" stroke-width="0.8"/><path d="M6 4.5 L6.5 9.5" stroke="#e0a840" stroke-width="1"/></svg><div style="left:246px;top:546px;width:1px;height:14px;background:#c8c8c8;"></div><div style="left:250px;top:544px;width:19px;height:17px;background:#cce4f7;border:1px solid #99c9ef"></div><svg style="position:absolute;left:254px;top:546px;" width="12" height="12" viewBox="0 0 12 12"><path d="M2 1 V10 H6 M2 5 H6" stroke="#3a6fb0" stroke-width="1.3" fill="none"/><rect x="6" y="3" width="5" height="4" fill="#bcd4ee" stroke="#3a6fb0" stroke-width="0.7"/><rect x="6" y="8" width="5" height="4" fill="#bcd4ee" stroke="#3a6fb0" stroke-width="0.7"/></svg><div style="left:271px;top:546px;width:1px;height:14px;background:#c8c8c8;"></div><svg style="position:absolute;left:277px;top:546px;" width="16" height="11" viewBox="0 0 16 11"><ellipse cx="8" cy="6" rx="7" ry="4" fill="#f0b020" stroke="#b07a10"/><circle cx="8" cy="6" r="2" fill="#6a4a10"/></svg><div style="left:295px;top:546px;width:1px;height:14px;background:#c8c8c8;"></div><svg style="position:absolute;left:300px;top:545px;" width="16" height="13" viewBox="0 0 16 13"><path d="M0.5 6 V12.5 H15.5 V6" stroke="#3a6fb0" stroke-width="1.4" fill="none"/><rect x="3" y="8" width="10" height="3" fill="#6a9ad0"/><path d="M8 0 V7 M5 4 L8 7 L11 4" stroke="#3a6fb0" stroke-width="1.3" fill="none"/></svg><svg style="position:absolute;left:319px;top:545px;" width="16" height="13" viewBox="0 0 16 13"><path d="M0.5 6 V12.5 H15.5 V6" stroke="#3a6fb0" stroke-width="1.4" fill="none"/><rect x="3" y="8" width="10" height="3" fill="#6a9ad0"/><path d="M8 7 V0.5 M5 3.5 L8 0.5 L11 3.5" stroke="#3a6fb0" stroke-width="1.3" fill="none"/></svg><div style="left:339px;top:546px;width:1px;height:14px;background:#c8c8c8;"></div><svg style="position:absolute;left:346px;top:545px;" width="12" height="13" viewBox="0 0 12 13"><rect x="0.5" y="0.5" width="11" height="12" fill="#e3eef9" stroke="#3a6fb0"/><rect x="2.5" y="0.5" width="7" height="5" fill="#3a6fb0"/><rect x="2.5" y="8" width="7" height="4.5" fill="#fff" stroke="#3a6fb0" stroke-width="0.7"/></svg><svg style="position:absolute;left:369px;top:546px;" width="5" height="12" viewBox="0 0 5 12"><circle cx="2.5" cy="2.0" r="1.6" fill="none" stroke="#6a6a6a" stroke-width="0.9"/><circle cx="2.5" cy="5.8" r="1.6" fill="none" stroke="#6a6a6a" stroke-width="0.9"/><circle cx="2.5" cy="9.6" r="1.6" fill="none" stroke="#6a6a6a" stroke-width="0.9"/></svg><svg style="position:absolute;left:18px;top:564.3px;" width="13" height="11" viewBox="0 0 13 11"><path d="M0.5 2 H4.5 L5.5 3 H10 V5 H0.5 Z" fill="#f4c878" stroke="#c9913a" stroke-width="0.8"/><path d="M0.5 10 L2.5 5 H12 L10 10 Z" fill="#fbe0a6" stroke="#c9913a" stroke-width="0.9"/><path d="M0.5 2 V10" stroke="#c9913a" stroke-width="0.9"/></svg><div id="t41" class="tx" style="left:34px;top:561.30px;line-height:17px;font-size:13px;color:#1a1a1a;font-weight:normal;font-family:'Liberation Sans',sans-serif;letter-spacing:-0.117px;">Database Connections</div><svg style="position:absolute;left:3px;top:584.4px;" width="9" height="6" viewBox="0 0 9 6"><path d="M0.8 1 L4.5 4.6 L8.2 1" stroke="#6a6a6a" stroke-width="1.3" fill="none"/></svg><svg style="position:absolute;left:18px;top:581.9px;" width="13" height="11" viewBox="0 0 13 11"><path d="M0.5 2 H4.5 L5.5 3 H10 V5 H0.5 Z" fill="#f4c878" stroke="#c9913a" stroke-width="0.8"/><path d="M0.5 10 L2.5 5 H12 L10 10 Z" fill="#fbe0a6" stroke="#c9913a" stroke-width="0.9"/><path d="M0.5 2 V10" stroke="#c9913a" stroke-width="0.9"/></svg><div id="t42" class="tx" style="left:34px;top:578.90px;line-height:17px;font-size:13px;color:#1a1a1a;font-weight:normal;font-family:'Liberation Sans',sans-serif;letter-spacing:-0.258px;">ODA Data Sources</div><svg style="position:absolute;left:34px;top:599.5px;" width="13" height="11" viewBox="0 0 13 11"><path d="M0.5 2 H4.5 L5.5 3 H10 V5 H0.5 Z" fill="#f4c878" stroke="#c9913a" stroke-width="0.8"/><path d="M0.5 10 L2.5 5 H12 L10 10 Z" fill="#fbe0a6" stroke="#c9913a" stroke-width="0.9"/><path d="M0.5 2 V10" stroke="#c9913a" stroke-width="0.9"/></svg><div id="t43" class="tx" style="left:50px;top:596.50px;line-height:17px;font-size:13px;color:#1a1a1a;font-weight:normal;font-family:'Liberation Sans',sans-serif;letter-spacing:-0.229px;">Flat File Data Source</div><svg style="position:absolute;left:34px;top:617.0999999999999px;" width="13" height="11" viewBox="0 0 13 11"><path d="M0.5 2 H4.5 L5.5 3 H10 V5 H0.5 Z" fill="#f4c878" stroke="#c9913a" stroke-width="0.8"/><path d="M0.5 10 L2.5 5 H12 L10 10 Z" fill="#fbe0a6" stroke="#c9913a" stroke-width="0.9"/><path d="M0.5 2 V10" stroke="#c9913a" stroke-width="0.9"/></svg><div id="t44" class="tx" style="left:50px;top:614.10px;line-height:17px;font-size:13px;color:#1a1a1a;font-weight:normal;font-family:'Liberation Sans',sans-serif;letter-spacing:-0.160px;">Web Services Data Source</div><svg style="position:absolute;left:34px;top:634.6999999999999px;" width="13" height="11" viewBox="0 0 13 11"><path d="M0.5 2 H4.5 L5.5 3 H10 V5 H0.5 Z" fill="#f4c878" stroke="#c9913a" stroke-width="0.8"/><path d="M0.5 10 L2.5 5 H12 L10 10 Z" fill="#fbe0a6" stroke="#c9913a" stroke-width="0.9"/><path d="M0.5 2 V10" stroke="#c9913a" stroke-width="0.9"/></svg><div id="t45" class="tx" style="left:50px;top:631.70px;line-height:17px;font-size:13px;color:#1a1a1a;font-weight:normal;font-family:'Liberation Sans',sans-serif;letter-spacing:-0.142px;">XML Data Source</div><div style="left:384px;top:61px;width:1223px;height:821px;background:#ffffff;"></div><div style="left:384px;top:61px;width:1223px;height:23px;background:#f0f0f0;"></div><div style="left:384px;top:61px;width:1223px;height:2px;background:#e4e4e4;"></div><div style="left:384px;top:82px;width:1223px;height:2px;background:#e7e7e7;"></div><div style="left:876px;top:61px;width:183px;height:23px;background:#ffffff;border-left:1px solid #e4e4e4;border-right:1px solid #e4e4e4;border-top:1px solid #e4e4e4"></div><svg style="position:absolute;left:390px;top:66px;" width="11" height="12" viewBox="0 0 11 12"><rect x="0.5" y="0.5" width="10" height="11" fill="#f4f7fb" stroke="#9aa8b8"/><rect x="0.5" y="0.5" width="10" height="3" fill="#f2c24c"/><path d="M2.5 6 H8.5 M2.5 8 H8.5" stroke="#6b88b0"/></svg><div id="t46" class="tx" style="left:404px;top:64.50px;line-height:17px;font-size:13px;color:#1a1a1a;font-weight:normal;font-family:'Liberation Sans',sans-serif;letter-spacing:0.157px;">user-config.xml</div><svg style="position:absolute;left:519px;top:66px;" width="11" height="13" viewBox="0 0 11 13"><path d="M0.5 0.5 H7 L10.5 4 V12.5 H0.5Z" fill="#eef3fa" stroke="#aab6c6"/><path d="M7 0.5 V4 H10.5" fill="#f0d08a" stroke="#c9a15a" stroke-width="0.7"/><path d="M2.5 4 H6 M2.5 6 H8.5 M2.5 8 H8.5 M2.5 10 H7.5" stroke="#6d8fc0" stroke-width="0.9"/></svg><div id="t47" class="tx" style="left:534px;top:64.50px;line-height:17px;font-size:13px;color:#1a1a1a;font-weight:normal;font-family:'Liberation Sans',sans-serif;letter-spacing:0.246px;">application.properties</div><svg style="position:absolute;left:689px;top:66px;" width="11" height="13" viewBox="0 0 11 13"><path d="M0.5 0.5 H7 L10.5 4 V12.5 H0.5Z" fill="#eef3fa" stroke="#aab6c6"/><path d="M7 0.5 V4 H10.5" fill="#f0d08a" stroke="#c9a15a" stroke-width="0.7"/><path d="M2.5 4 H6 M2.5 6 H8.5 M2.5 8 H8.5 M2.5 10 H7.5" stroke="#6d8fc0" stroke-width="0.9"/></svg><div id="t48" class="tx" style="left:703px;top:64.50px;line-height:17px;font-size:13px;color:#1a1a1a;font-weight:normal;font-family:'Liberation Sans',sans-serif;letter-spacing:0.297px;">application-job.properties</div><svg style="position:absolute;left:881px;top:66px;" width="12" height="13" viewBox="0 0 12 13"><path d="M1.5 0.5 H7.5 L10.5 3.5 V12.5 H1.5 Z" fill="#f4f7fb" stroke="#c4ab74" stroke-width="1"/><path d="M7.5 0.5 V3.5 H10.5" fill="#e8c27a" stroke="#c9a15a" stroke-width="0.8"/><path d="M6.8 3.5 V8.5 Q6.8 10.6 4.8 10.6 Q3.6 10.6 3.3 9.6" stroke="#3a6fb0" stroke-width="1.6" fill="none"/></svg><div id="t49" class="tx" style="left:895px;top:64.50px;line-height:17px;font-size:13px;color:#1a1a1a;font-weight:normal;font-family:'Liberation Sans',sans-serif;letter-spacing:-0.154px;">SampleXxlJobDemo.java</div><svg style="position:absolute;left:1063px;top:66px;" width="12" height="13" viewBox="0 0 12 13"><path d="M1.5 0.5 H7.5 L10.5 3.5 V12.5 H1.5 Z" fill="#f4f7fb" stroke="#c4ab74" stroke-width="1"/><path d="M7.5 0.5 V3.5 H10.5" fill="#e8c27a" stroke="#c9a15a" stroke-width="0.8"/><path d="M6.8 3.5 V8.5 Q6.8 10.6 4.8 10.6 Q3.6 10.6 3.3 9.6" stroke="#3a6fb0" stroke-width="1.6" fill="none"/></svg><div id="t50" class="tx" style="left:1077px;top:64.50px;line-height:17px;font-size:13px;color:#1a1a1a;font-weight:normal;font-family:'Liberation Sans',sans-serif;letter-spacing:0.121px;">Application.java</div><svg style="position:absolute;left:1045px;top:69.5px;" width="8" height="8" viewBox="0 0 8 8"><path d="M0.5 0.5 L7.5 7.5 M7.5 0.5 L0.5 7.5" stroke="#7a7a7a" stroke-width="1.2"/></svg><svg style="position:absolute;left:1572px;top:67px;" width="9" height="5" viewBox="0 0 9 5"><rect x="0.7" y="0.7" width="7.6" height="3" rx="0.6" fill="none" stroke="#444" stroke-width="1.3"/></svg><svg style="position:absolute;left:1590px;top:66px;" width="10" height="10" viewBox="0 0 10 10"><rect x="0.7" y="0.7" width="8.6" height="8.2" rx="0.6" fill="none" stroke="#444" stroke-width="1.3"/><path d="M0.8 1.9 H9.2" stroke="#444" stroke-width="1.6"/></svg><div style="left:384px;top:84px;width:11px;height:782px;background:#f8f8f8;"></div><div style="left:385px;top:329px;width:10px;height:200px;background:#68ace6;"></div><div style="left:395px;top:84px;width:14px;height:782px;background:#ffffff;"></div><div style="left:408px;top:84px;width:1px;height:782px;background:#f3f3f3;"></div><div style="left:409px;top:376.22999999999996px;width:1172px;height:15.5px;background:#e8f2fe;"></div><div style="left:440px;top:376px;width:186px;height:15px;background:#0078d7;"></div><svg style="position:absolute;left:401px;top:102.89999999999999px;" width="8" height="8" viewBox="0 0 8 8"><circle cx="4" cy="4" r="3.6" fill="#e6ebf0" stroke="#c3ccd6" stroke-width="0.8"/><path d="M2 4 H6" stroke="#8e9aa6" stroke-width="1"/></svg><svg style="position:absolute;left:401px;top:333.675px;" width="8" height="8" viewBox="0 0 8 8"><circle cx="4" cy="4" r="3.6" fill="#e6ebf0" stroke="#c3ccd6" stroke-width="0.8"/><path d="M2 4 H6" stroke="#8e9aa6" stroke-width="1"/></svg><svg style="position:absolute;left:401px;top:379.83px;" width="8" height="8" viewBox="0 0 8 8"><circle cx="4" cy="4" r="3.6" fill="#e6ebf0" stroke="#c3ccd6" stroke-width="0.8"/><path d="M2 4 H6" stroke="#8e9aa6" stroke-width="1"/></svg><svg style="position:absolute;left:401px;top:564.4499999999999px;" width="8" height="8" viewBox="0 0 8 8"><circle cx="4" cy="4" r="3.6" fill="#e6ebf0" stroke="#c3ccd6" stroke-width="0.8"/><path d="M2 4 H6" stroke="#8e9aa6" stroke-width="1"/></svg><svg style="position:absolute;left:401px;top:610.6049999999999px;" width="8" height="8" viewBox="0 0 8 8"><circle cx="4" cy="4" r="3.6" fill="#e6ebf0" stroke="#c3ccd6" stroke-width="0.8"/><path d="M2 4 H6" stroke="#8e9aa6" stroke-width="1"/></svg><div class="cd" style="left:411px;top:101.60px;line-height:15.385px;width:1170px;overflow:hidden;height:16px"><span class="jd">/**</span></div><div class="cd" style="left:411px;top:116.98px;line-height:15.385px;width:1170px;overflow:hidden;height:16px"><span class="jd"> * job<span class="cj">开发示例（</span>Bean<span class="cj">模式）</span></span></div><div class="cd" style="left:411px;top:132.37px;line-height:15.385px;width:1170px;overflow:hidden;height:16px"><span class="jd"> *</span></div><div class="cd" style="left:411px;top:147.75px;line-height:15.385px;width:1170px;overflow:hidden;height:16px"><span class="jd"> * <span class="cj">开发步骤：</span></span></div><div class="cd" style="left:411px;top:163.14px;line-height:15.385px;width:1170px;overflow:hidden;height:16px"><span class="jd"> *      1<span class="cj">、任务开发：在</span>Spring Bean<span class="cj">实例中，开发</span>Job<span class="cj">方法；</span></span></div><div class="cd" style="left:411px;top:178.52px;line-height:15.385px;width:1170px;overflow:hidden;height:16px"><span class="jd"> *      2<span class="cj">、注解配置：为</span>Job<span class="cj">方法添加注解</span> &quot;@XxlJob(value=&quot;<span class="cj">自定义</span>jobhandler<span class="cj">名称</span>&quot;, init = &quot;JobHandler<span class="cj">初始化方法</span>&quot;, destroy = &quot;JobHandler<span class="cj">销毁方法</span>&quot;)&quot;<span class="cj">，注解</span>value<span class="cj">值对应的是调度中心新建任务的</span>JobHandler<span class="cj">属性的值。</span></span></div><div class="cd" style="left:411px;top:193.91px;line-height:15.385px;width:1170px;overflow:hidden;height:16px"><span class="jd"> *      3<span class="cj">、执行日志：需要通过</span> &quot;XxlJobHelper.log&quot; <span class="cj">打印执行日志；</span></span></div><div class="cd" style="left:411px;top:209.29px;line-height:15.385px;width:1170px;overflow:hidden;height:16px"><span class="jd"> *      4<span class="cj">、任务结果：默认任务结果为</span> &quot;<span class="cj">成功</span>&quot; <span class="cj">状态，不需要主动设置；如有诉求，比如设置任务结果为失败，可以通过</span> &quot;XxlJobHelper.handleFail/handleSuccess&quot; <span class="cj">自主设置任务结果；</span></span></div><div class="cd" style="left:411px;top:224.68px;line-height:15.385px;width:1170px;overflow:hidden;height:16px"><span class="jd"> *</span></div><div class="cd" style="left:411px;top:240.06px;line-height:15.385px;width:1170px;overflow:hidden;height:16px"><span class="jd"> */</span></div><div class="cd" style="left:411px;top:255.45px;line-height:15.385px;width:1170px;overflow:hidden;height:16px"><span class="an">@Component</span></div><div class="cd" style="left:411px;top:270.83px;line-height:15.385px;width:1170px;overflow:hidden;height:16px"><span class="kw">public</span> <span class="kw">class</span> SampleXxlJobDemo {</div><div class="cd" style="left:411px;top:286.22px;line-height:15.385px;width:1170px;overflow:hidden;height:16px">    <span class="kw">private</span> <span class="kw">static</span> Logger <span class="sf">logger</span> = LoggerFactory.<span class="it">getLogger</span>(SampleXxlJobDemo.<span class="kw">class</span>);</div><div class="cd" style="left:411px;top:332.38px;line-height:15.385px;width:1170px;overflow:hidden;height:16px">    <span class="jd">/**</span></div><div class="cd" style="left:411px;top:347.76px;line-height:15.385px;width:1170px;overflow:hidden;height:16px">    <span class="jd"> * 1<span class="cj">、简单任务示例（</span>Bean<span class="cj">模式）</span></span></div><div class="cd" style="left:411px;top:363.14px;line-height:15.385px;width:1170px;overflow:hidden;height:16px">    <span class="jd"> */</span></div><div class="cd" style="left:411px;top:378.53px;line-height:15.385px;width:1170px;overflow:hidden;height:16px">    <span style="color:#fff">@XxlJob(&quot;demoJobHandler1&quot;)</span></div><div class="cd" style="left:411px;top:393.91px;line-height:15.385px;width:1170px;overflow:hidden;height:16px">    <span class="kw">public</span> <span class="kw">void</span> demoJobHandler1() <span class="kw">throws</span> Exception {</div><div class="cd" style="left:411px;top:409.30px;line-height:15.385px;width:1170px;overflow:hidden;height:16px">        XxlJobHelper.<span class="it">log</span>(<span class="st">&quot;XXL-JOB, Hello World.&quot;</span>);</div><div class="cd" style="left:411px;top:440.07px;line-height:15.385px;width:1170px;overflow:hidden;height:16px">        <span class="kw">for</span> (<span class="kw">int</span> <span class="lv">i</span> = 0; <span class="lv">i</span> &lt; 5; <span class="lv">i</span>++) {</div><div class="cd" style="left:411px;top:455.46px;line-height:15.385px;width:1170px;overflow:hidden;height:16px">            XxlJobHelper.<span class="it">log</span>(<span class="st">&quot;beat at:&quot;</span> + <span class="lv">i</span>);</div><div class="cd" style="left:411px;top:470.84px;line-height:15.385px;width:1170px;overflow:hidden;height:16px">            TimeUnit.<span class="sf" style="font-weight:bold">SECONDS</span>.sleep(2);</div><div class="cd" style="left:411px;top:486.23px;line-height:15.385px;width:1170px;overflow:hidden;height:16px">        }</div><div class="cd" style="left:411px;top:501.61px;line-height:15.385px;width:1170px;overflow:hidden;height:16px">        <span class="cm">// default success</span></div><div class="cd" style="left:411px;top:517.00px;line-height:15.385px;width:1170px;overflow:hidden;height:16px">    }</div><div class="cd" style="left:411px;top:563.15px;line-height:15.385px;width:1170px;overflow:hidden;height:16px">    <span class="jd">/**</span></div><div class="cd" style="left:411px;top:578.53px;line-height:15.385px;width:1170px;overflow:hidden;height:16px">    <span class="jd"> * 2<span class="cj">、分片广播任务</span></span></div><div class="cd" style="left:411px;top:593.92px;line-height:15.385px;width:1170px;overflow:hidden;height:16px">    <span class="jd"> */</span></div><div class="cd" style="left:411px;top:609.30px;line-height:15.385px;width:1170px;overflow:hidden;height:16px">    <span class="an">@XxlJob</span>(<span class="st">&quot;shardingJobHandler1&quot;</span>)</div><div class="cd" style="left:411px;top:624.69px;line-height:15.385px;width:1170px;overflow:hidden;height:16px">    <span class="kw">public</span> <span class="kw">void</span> shardingJobHandler1() <span class="kw">throws</span> Exception {</div><div class="cd" style="left:411px;top:655.46px;line-height:15.385px;width:1170px;overflow:hidden;height:16px">        <span class="cm">// <span class="cj">分片参数</span></span></div><div class="cd" style="left:411px;top:670.85px;line-height:15.385px;width:1170px;overflow:hidden;height:16px">        <span class="kw">int</span> <span class="lv">shardIndex</span> = XxlJobHelper.<span class="it">getShardIndex</span>();</div><div class="cd" style="left:411px;top:686.23px;line-height:15.385px;width:1170px;overflow:hidden;height:16px">        <span class="kw">int</span> <span class="lv">shardTotal</span> = XxlJobHelper.<span class="it">getShardTotal</span>();</div><div class="cd" style="left:411px;top:717.00px;line-height:15.385px;width:1170px;overflow:hidden;height:16px">        XxlJobHelper.<span class="it">log</span>(<span class="st">&quot;<span class="cj">分片参数：当前分片序号</span> = {}, <span class="cj">总分片数</span> = {}&quot;</span>, <span class="lv">shardIndex</span>, <span class="lv">shardTotal</span>);</div><div class="cd" style="left:411px;top:747.77px;line-height:15.385px;width:1170px;overflow:hidden;height:16px">        <span class="cm">// <span class="cj">业务逻辑</span></span></div><div class="cd" style="left:411px;top:763.15px;line-height:15.385px;width:1170px;overflow:hidden;height:16px">        <span class="kw">for</span> (<span class="kw">int</span> <span class="lv">i</span> = 0; <span class="lv">i</span> &lt; <span class="lv">shardTotal</span>; <span class="lv">i</span>++) {</div><div class="cd" style="left:411px;top:778.54px;line-height:15.385px;width:1170px;overflow:hidden;height:16px">            <span class="kw">if</span> (<span class="lv">i</span> == <span class="lv">shardIndex</span>) {</div><div class="cd" style="left:411px;top:793.93px;line-height:15.385px;width:1170px;overflow:hidden;height:16px">                XxlJobHelper.<span class="it">log</span>(<span class="st">&quot;<span class="cj">第</span> {} <span class="cj">片</span>, <span class="cj">命中分片开始处理</span>&quot;</span>, <span class="lv">i</span>);</div><div class="cd" style="left:411px;top:809.31px;line-height:15.385px;width:1170px;overflow:hidden;height:16px">            } <span class="kw">else</span> {</div><div class="cd" style="left:411px;top:824.70px;line-height:15.385px;width:1170px;overflow:hidden;height:16px">                XxlJobHelper.<span class="it">log</span>(<span class="st">&quot;<span class="cj">第</span> {} <span class="cj">片</span>, <span class="cj">忽略</span>&quot;</span>, <span class="lv">i</span>);</div><div class="cd" style="left:411px;top:840.08px;line-height:15.385px;width:1170px;overflow:hidden;height:16px">            }</div><div class="cd" style="left:411px;top:855.47px;line-height:15.385px;width:1170px;overflow:hidden;height:16px">        }</div><div style="left:431px;top:368px;width:203px;height:26px;border:3px solid #ff1a0a;border-radius:4px"></div><div style="left:626px;top:376px;width:1px;height:15px;background:#000;"></div><svg style="position:absolute;left:825px;top:189px;" width="71" height="3" viewBox="0 0 71 3"><path d="M0 2 Q1.5 0 3 2 T6 2 T9 2 T12 2 T15 2 T18 2 T21 2 T24 2 T27 2 T30 2 T33 2 T36 2 T39 2 T42 2 T45 2 T48 2 T51 2 T54 2 T57 2 T60 2 T63 2 T66 2 T69 2 T72 2 T75 2" stroke="#f59050" stroke-width="0.8" fill="none"/></svg><svg style="position:absolute;left:944px;top:189px;" width="29" height="3" viewBox="0 0 29 3"><path d="M0 2 Q1.5 0 3 2 T6 2 T9 2 T12 2 T15 2 T18 2 T21 2 T24 2 T27 2" stroke="#f59050" stroke-width="0.8" fill="none"/></svg><div style="left:384px;top:866px;width:1197px;height:16px;background:#ffffff;"></div><div style="left:384px;top:866px;width:25px;height:16px;background:#f7f7f7;"></div><div style="left:1581px;top:84px;width:15px;height:782px;background:#f0f0f0;"></div><div style="left:1581px;top:109px;width:15px;height:159px;background:#cdcdcd;"></div><svg style="position:absolute;left:1584px;top:89px;" width="9" height="6" viewBox="0 0 9 6"><path d="M0.8 5 L4.5 1.3 L8.2 5" stroke="#606060" stroke-width="1.5" fill="none"/></svg><svg style="position:absolute;left:1584px;top:855px;" width="9" height="6" viewBox="0 0 9 6"><path d="M0.8 1 L4.5 4.7 L8.2 1" stroke="#606060" stroke-width="1.5" fill="none"/></svg><div style="left:409px;top:866px;width:1172px;height:15px;background:#f0f0f0;"></div><div style="left:426px;top:866px;width:976px;height:15px;background:#cdcdcd;"></div><svg style="position:absolute;left:414px;top:870px;" width="6" height="9" viewBox="0 0 6 9"><path d="M5 0.8 L1.3 4.5 L5 8.2" stroke="#606060" stroke-width="1.5" fill="none"/></svg><svg style="position:absolute;left:1569px;top:870px;" width="6" height="9" viewBox="0 0 6 9"><path d="M1 0.8 L4.7 4.5 L1 8.2" stroke="#606060" stroke-width="1.5" fill="none"/></svg><div style="left:1581px;top:866px;width:15px;height:15px;background:#f0f0f0;"></div><div style="left:1596px;top:84px;width:11px;height:798px;background:#f7f7f7;"></div><div style="left:1612px;top:61px;width:304px;height:821px;background:#f0f0f0;"></div><div style="left:1612px;top:61px;width:304px;height:23px;background:#e5e5e5;"></div><div style="left:1612px;top:61px;width:76px;height:23px;background:#f0f0f0;"></div><svg style="position:absolute;left:1615px;top:66px;" width="14" height="13" viewBox="0 0 14 13"><path d="M6 1 H10 L13 12 H1Z" fill="#e8eef6" stroke="#8aa0c0" stroke-width="0.8"/><rect x="1" y="9" width="7" height="3" fill="#d07a2a"/><rect x="1" y="7" width="7" height="2" fill="#3aa060"/><rect x="5" y="0.5" width="5" height="2" fill="#f2c24c"/></svg><div id="t51" class="tx" style="left:1632px;top:64.50px;line-height:17px;font-size:12px;color:#1a1a1a;font-weight:normal;font-family:'Liberation Sans',sans-serif;"><span style="font-size:12px;letter-spacing:0">构件库</span></div><svg style="position:absolute;left:1673px;top:69.5px;" width="8" height="8" viewBox="0 0 8 8"><path d="M0.5 0.5 L7.5 7.5 M7.5 0.5 L0.5 7.5" stroke="#7a7a7a" stroke-width="1.2"/></svg><svg style="position:absolute;left:1689px;top:65px;" width="15" height="14" viewBox="0 0 15 14"><circle cx="3" cy="3" r="2.5" fill="#3aa060"/><rect x="5" y="6" width="9" height="6" fill="#bcd4ee" stroke="#6b88b0"/><rect x="7" y="12" width="5" height="2" fill="#6b88b0"/></svg><div id="t52" class="tx" style="left:1707px;top:64.50px;line-height:17px;font-size:12px;color:#1a1a1a;font-weight:normal;font-family:'Liberation Sans',sans-serif;"><span style="font-size:12px;letter-spacing:0">业务资源</span></div><svg style="position:absolute;left:1762px;top:66px;" width="13" height="13" viewBox="0 0 13 13"><circle cx="6.5" cy="6.5" r="6" fill="#f2b33d"/><path d="M6.5 0.5 A6 6 0 0 0 0.5 8 Q3 6 6.5 7Z" fill="#5bbf5e"/><circle cx="7.5" cy="6" r="2.3" fill="#333"/><rect x="4.5" y="8.5" width="6" height="4" fill="#333"/></svg><div id="t53" class="tx" style="left:1778px;top:64.50px;line-height:17px;font-size:12px;color:#1a1a1a;font-weight:normal;font-family:'Liberation Sans',sans-serif;"><span style="font-size:12px;letter-spacing:0">组织模型</span></div><svg style="position:absolute;left:1883px;top:67px;" width="9" height="5" viewBox="0 0 9 5"><rect x="0.7" y="0.7" width="7.6" height="3" rx="0.6" fill="none" stroke="#444" stroke-width="1.3"/></svg><svg style="position:absolute;left:1901px;top:66px;" width="10" height="10" viewBox="0 0 10 10"><rect x="0.7" y="0.7" width="8.6" height="8.2" rx="0.6" fill="none" stroke="#444" stroke-width="1.3"/><path d="M0.8 1.9 H9.2" stroke="#444" stroke-width="1.6"/></svg><svg style="position:absolute;left:1840px;top:86px;" width="14" height="13" viewBox="0 0 14 13"><path d="M3 1 H7 L8 2 H13 V10 H3Z" fill="#f7d27a" stroke="#d0a04a"/><rect x="0.5" y="6" width="5" height="7" fill="#4a86c8" stroke="#2f5f9a"/></svg><div style="left:1857px;top:84px;width:18px;height:17px;background:#cce4f7;border:1px solid #99c9ef"></div><svg style="position:absolute;left:1859px;top:86px;" width="14" height="13" viewBox="0 0 14 13"><path d="M0.5 1 H5 L6 2 H11 V10 H0.5Z" fill="#f7d27a" stroke="#d0a04a"/><circle cx="10" cy="9" r="3" fill="#f3b33a"/><path d="M8 9.5 Q9 7.5 11 8.5" stroke="#3a8ad8" stroke-width="1.2" fill="none"/></svg><div style="left:1877px;top:86px;width:1px;height:14px;background:#c8c8c8;"></div><svg style="position:absolute;left:1884px;top:87px;" width="12" height="12" viewBox="0 0 12 12"><rect x="0.5" y="0.5" width="8" height="8" fill="#dce8f4" stroke="#9fb3cc" stroke-width="1"/><rect x="2.5" y="2.5" width="9" height="9" fill="#eef6fc" stroke="#8d9bb0" stroke-width="1"/><path d="M4.5 7 H9.5" stroke="#4f7fb0" stroke-width="1.6"/></svg><svg style="position:absolute;left:1904px;top:86px;" width="5" height="12" viewBox="0 0 5 12"><circle cx="2.5" cy="2.0" r="1.6" fill="none" stroke="#6a6a6a" stroke-width="0.9"/><circle cx="2.5" cy="5.8" r="1.6" fill="none" stroke="#6a6a6a" stroke-width="0.9"/><circle cx="2.5" cy="9.6" r="1.6" fill="none" stroke="#6a6a6a" stroke-width="0.9"/></svg><div style="left:1617px;top:105px;width:259px;height:20px;background:#ffffff;border:1px solid #a9a9a9"></div><div style="left:1880px;top:106px;width:33px;height:21px;background:#e1e1e1;border:1px solid #adadad"></div><div id="t54" class="tx" style="left:1885px;top:108.00px;line-height:17px;font-size:12px;color:#000;font-weight:normal;font-family:'Liberation Sans',sans-serif;"><span style="font-size:12px;letter-spacing:0">搜索</span></div><div style="left:1617px;top:131px;width:296px;height:747px;background:#ffffff;border:1px solid #c8c8c8"></div><svg style="position:absolute;left:1624px;top:137.4px;" width="6" height="9" viewBox="0 0 6 9"><path d="M1 0.8 L4.6 4.5 L1 8.2" stroke="#a6a6a6" stroke-width="1.3" fill="none"/></svg><svg style="position:absolute;left:1636px;top:134.9px;" width="13" height="13" viewBox="0 0 13 13"><path d="M1 2 Q1 1 2 1 H5 L6.5 2.5 H10 Q11 2.5 11 3.5 V9 H1 Z" fill="#f3cf7a" stroke="#c99a3e" stroke-width="0.9"/><rect x="4.5" y="5" width="3" height="3" fill="#8c6a2a"/><rect x="2" y="8.5" width="3.5" height="3.5" fill="#3056a8"/><rect x="7" y="8.5" width="3.5" height="3.5" fill="#3056a8"/><path d="M6 8 V9 M3.7 8.5 H8.7" stroke="#3a3a3a" stroke-width="0.8"/></svg><div id="t55" class="tx" style="left:1653.5px;top:132.90px;line-height:17px;font-size:13px;color:#1a1a1a;font-weight:normal;font-family:'Liberation Sans',sans-serif;letter-spacing:0.216px;">com.primeton.eos.foundation</div><svg style="position:absolute;left:1624px;top:155.12px;" width="6" height="9" viewBox="0 0 6 9"><path d="M1 0.8 L4.6 4.5 L1 8.2" stroke="#a6a6a6" stroke-width="1.3" fill="none"/></svg><svg style="position:absolute;left:1636px;top:152.62px;" width="13" height="13" viewBox="0 0 13 13"><path d="M1 2 Q1 1 2 1 H5 L6.5 2.5 H10 Q11 2.5 11 3.5 V9 H1 Z" fill="#f3cf7a" stroke="#c99a3e" stroke-width="0.9"/><rect x="4.5" y="5" width="3" height="3" fill="#8c6a2a"/><rect x="2" y="8.5" width="3.5" height="3.5" fill="#3056a8"/><rect x="7" y="8.5" width="3.5" height="3.5" fill="#3056a8"/><path d="M6 8 V9 M3.7 8.5 H8.7" stroke="#3a3a3a" stroke-width="0.8"/></svg><div id="t56" class="tx" style="left:1653.5px;top:150.62px;line-height:17px;font-size:13px;color:#1a1a1a;font-weight:normal;font-family:'Liberation Sans',sans-serif;letter-spacing:0.258px;">com.primeton.gocom.afcenter.common</div><svg style="position:absolute;left:1624px;top:172.84px;" width="6" height="9" viewBox="0 0 6 9"><path d="M1 0.8 L4.6 4.5 L1 8.2" stroke="#a6a6a6" stroke-width="1.3" fill="none"/></svg><svg style="position:absolute;left:1636px;top:170.34px;" width="13" height="13" viewBox="0 0 13 13"><path d="M1 2 Q1 1 2 1 H5 L6.5 2.5 H10 Q11 2.5 11 3.5 V9 H1 Z" fill="#f3cf7a" stroke="#c99a3e" stroke-width="0.9"/><rect x="4.5" y="5" width="3" height="3" fill="#8c6a2a"/><rect x="2" y="8.5" width="3.5" height="3.5" fill="#3056a8"/><rect x="7" y="8.5" width="3.5" height="3.5" fill="#3056a8"/><path d="M6 8 V9 M3.7 8.5 H8.7" stroke="#3a3a3a" stroke-width="0.8"/></svg><div id="t57" class="tx" style="left:1653.5px;top:168.34px;line-height:17px;font-size:13px;color:#1a1a1a;font-weight:normal;font-family:'Liberation Sans',sans-serif;letter-spacing:0.279px;">com.primeton.gocom.afcenter.model</div><svg style="position:absolute;left:1624px;top:190.56px;" width="6" height="9" viewBox="0 0 6 9"><path d="M1 0.8 L4.6 4.5 L1 8.2" stroke="#a6a6a6" stroke-width="1.3" fill="none"/></svg><svg style="position:absolute;left:1636px;top:188.06px;" width="13" height="13" viewBox="0 0 13 13"><path d="M1 2 Q1 1 2 1 H5 L6.5 2.5 H10 Q11 2.5 11 3.5 V9 H1 Z" fill="#f3cf7a" stroke="#c99a3e" stroke-width="0.9"/><rect x="4.5" y="5" width="3" height="3" fill="#8c6a2a"/><rect x="2" y="8.5" width="3.5" height="3.5" fill="#3056a8"/><rect x="7" y="8.5" width="3.5" height="3.5" fill="#3056a8"/><path d="M6 8 V9 M3.7 8.5 H8.7" stroke="#3a3a3a" stroke-width="0.8"/></svg><div id="t58" class="tx" style="left:1653.5px;top:186.06px;line-height:17px;font-size:13px;color:#1a1a1a;font-weight:normal;font-family:'Liberation Sans',sans-serif;letter-spacing:0.270px;">com.primeton.gocom.bfp.common.bpsclient</div><svg style="position:absolute;left:1624px;top:208.28px;" width="6" height="9" viewBox="0 0 6 9"><path d="M1 0.8 L4.6 4.5 L1 8.2" stroke="#a6a6a6" stroke-width="1.3" fill="none"/></svg><svg style="position:absolute;left:1636px;top:205.78px;" width="13" height="13" viewBox="0 0 13 13"><path d="M1 2 Q1 1 2 1 H5 L6.5 2.5 H10 Q11 2.5 11 3.5 V9 H1 Z" fill="#f3cf7a" stroke="#c99a3e" stroke-width="0.9"/><rect x="4.5" y="5" width="3" height="3" fill="#8c6a2a"/><rect x="2" y="8.5" width="3.5" height="3.5" fill="#3056a8"/><rect x="7" y="8.5" width="3.5" height="3.5" fill="#3056a8"/><path d="M6 8 V9 M3.7 8.5 H8.7" stroke="#3a3a3a" stroke-width="0.8"/></svg><div id="t59" class="tx" style="left:1653.5px;top:203.78px;line-height:17px;font-size:13px;color:#1a1a1a;font-weight:normal;font-family:'Liberation Sans',sans-serif;letter-spacing:0.315px;">com.primeton.gocom.bfp.config</div><svg style="position:absolute;left:1624px;top:226.0px;" width="6" height="9" viewBox="0 0 6 9"><path d="M1 0.8 L4.6 4.5 L1 8.2" stroke="#a6a6a6" stroke-width="1.3" fill="none"/></svg><svg style="position:absolute;left:1636px;top:223.5px;" width="13" height="13" viewBox="0 0 13 13"><path d="M1 2 Q1 1 2 1 H5 L6.5 2.5 H10 Q11 2.5 11 3.5 V9 H1 Z" fill="#f3cf7a" stroke="#c99a3e" stroke-width="0.9"/><rect x="4.5" y="5" width="3" height="3" fill="#8c6a2a"/><rect x="2" y="8.5" width="3.5" height="3.5" fill="#3056a8"/><rect x="7" y="8.5" width="3.5" height="3.5" fill="#3056a8"/><path d="M6 8 V9 M3.7 8.5 H8.7" stroke="#3a3a3a" stroke-width="0.8"/></svg><div id="t60" class="tx" style="left:1653.5px;top:221.50px;line-height:17px;font-size:13px;color:#1a1a1a;font-weight:normal;font-family:'Liberation Sans',sans-serif;letter-spacing:0.266px;">com.primeton.gocom.bfp.framework.model</div><svg style="position:absolute;left:1624px;top:243.72px;" width="6" height="9" viewBox="0 0 6 9"><path d="M1 0.8 L4.6 4.5 L1 8.2" stroke="#a6a6a6" stroke-width="1.3" fill="none"/></svg><svg style="position:absolute;left:1636px;top:241.22px;" width="13" height="13" viewBox="0 0 13 13"><path d="M1 2 Q1 1 2 1 H5 L6.5 2.5 H10 Q11 2.5 11 3.5 V9 H1 Z" fill="#f3cf7a" stroke="#c99a3e" stroke-width="0.9"/><rect x="4.5" y="5" width="3" height="3" fill="#8c6a2a"/><rect x="2" y="8.5" width="3.5" height="3.5" fill="#3056a8"/><rect x="7" y="8.5" width="3.5" height="3.5" fill="#3056a8"/><path d="M6 8 V9 M3.7 8.5 H8.7" stroke="#3a3a3a" stroke-width="0.8"/></svg><div id="t61" class="tx" style="left:1653.5px;top:239.22px;line-height:17px;font-size:13px;color:#1a1a1a;font-weight:normal;font-family:'Liberation Sans',sans-serif;letter-spacing:0.196px;">com.primeton.gocom.bfp.message.model</div><svg style="position:absolute;left:1624px;top:261.44px;" width="6" height="9" viewBox="0 0 6 9"><path d="M1 0.8 L4.6 4.5 L1 8.2" stroke="#a6a6a6" stroke-width="1.3" fill="none"/></svg><svg style="position:absolute;left:1636px;top:258.94px;" width="13" height="13" viewBox="0 0 13 13"><path d="M1 2 Q1 1 2 1 H5 L6.5 2.5 H10 Q11 2.5 11 3.5 V9 H1 Z" fill="#f3cf7a" stroke="#c99a3e" stroke-width="0.9"/><rect x="4.5" y="5" width="3" height="3" fill="#8c6a2a"/><rect x="2" y="8.5" width="3.5" height="3.5" fill="#3056a8"/><rect x="7" y="8.5" width="3.5" height="3.5" fill="#3056a8"/><path d="M6 8 V9 M3.7 8.5 H8.7" stroke="#3a3a3a" stroke-width="0.8"/></svg><div id="t62" class="tx" style="left:1653.5px;top:256.94px;line-height:17px;font-size:13px;color:#1a1a1a;font-weight:normal;font-family:'Liberation Sans',sans-serif;letter-spacing:0.241px;">com.primeton.gocom.bfp.task.model</div><svg style="position:absolute;left:1624px;top:279.15999999999997px;" width="6" height="9" viewBox="0 0 6 9"><path d="M1 0.8 L4.6 4.5 L1 8.2" stroke="#a6a6a6" stroke-width="1.3" fill="none"/></svg><svg style="position:absolute;left:1636px;top:276.65999999999997px;" width="13" height="13" viewBox="0 0 13 13"><path d="M1 2 Q1 1 2 1 H5 L6.5 2.5 H10 Q11 2.5 11 3.5 V9 H1 Z" fill="#f3cf7a" stroke="#c99a3e" stroke-width="0.9"/><rect x="4.5" y="5" width="3" height="3" fill="#8c6a2a"/><rect x="2" y="8.5" width="3.5" height="3.5" fill="#3056a8"/><rect x="7" y="8.5" width="3.5" height="3.5" fill="#3056a8"/><path d="M6 8 V9 M3.7 8.5 H8.7" stroke="#3a3a3a" stroke-width="0.8"/></svg><div id="t63" class="tx" style="left:1653.5px;top:274.66px;line-height:17px;font-size:13px;color:#1a1a1a;font-weight:normal;font-family:'Liberation Sans',sans-serif;letter-spacing:0.313px;">com.primeton.gocom.lowcode.common</div><svg style="position:absolute;left:1624px;top:296.88px;" width="6" height="9" viewBox="0 0 6 9"><path d="M1 0.8 L4.6 4.5 L1 8.2" stroke="#a6a6a6" stroke-width="1.3" fill="none"/></svg><svg style="position:absolute;left:1636px;top:294.38px;" width="13" height="13" viewBox="0 0 13 13"><path d="M1 2 Q1 1 2 1 H5 L6.5 2.5 H10 Q11 2.5 11 3.5 V9 H1 Z" fill="#f3cf7a" stroke="#c99a3e" stroke-width="0.9"/><rect x="4.5" y="5" width="3" height="3" fill="#8c6a2a"/><rect x="2" y="8.5" width="3.5" height="3.5" fill="#3056a8"/><rect x="7" y="8.5" width="3.5" height="3.5" fill="#3056a8"/><path d="M6 8 V9 M3.7 8.5 H8.7" stroke="#3a3a3a" stroke-width="0.8"/></svg><div id="t64" class="tx" style="left:1653.5px;top:292.38px;line-height:17px;font-size:13px;color:#1a1a1a;font-weight:normal;font-family:'Liberation Sans',sans-serif;letter-spacing:0.306px;">com.primeton.gocom.lowcode.model</div><div style="left:1912px;top:131px;width:1px;height:747px;background:#c8c8c8;"></div><div style="left:1913px;top:131px;width:3px;height:747px;background:#f0f0f0;"></div><div style="left:1618px;top:861px;width:294px;height:16px;background:#f0f0f0;"></div><div style="left:1635px;top:861px;width:254px;height:16px;background:#cdcdcd;"></div><svg style="position:absolute;left:1623px;top:865px;" width="6" height="9" viewBox="0 0 6 9"><path d="M5 0.8 L1.3 4.5 L5 8.2" stroke="#606060" stroke-width="1.5" fill="none"/></svg><svg style="position:absolute;left:1900px;top:865px;" width="6" height="9" viewBox="0 0 6 9"><path d="M1 0.8 L4.7 4.5 L1 8.2" stroke="#606060" stroke-width="1.5" fill="none"/></svg><div style="left:384px;top:886px;width:1532px;height:90px;background:#f0f0f0;"></div><div style="left:384px;top:886px;width:1532px;height:23px;background:#e5e5e5;"></div><div style="left:384px;top:886px;width:77px;height:23px;background:#f0f0f0;"></div><svg style="position:absolute;left:389px;top:892px;" width="13" height="12" viewBox="0 0 13 12"><rect x="0.8" y="0.8" width="11" height="8.5" rx="1.5" fill="#dbe9f7" stroke="#2f6db3" stroke-width="1.3"/><rect x="3" y="9.5" width="7" height="2" fill="#2f6db3"/><path d="M3 4 H8" stroke="#2f6db3"/></svg><div id="t65" class="tx" style="left:404.5px;top:889.50px;line-height:17px;font-size:12px;color:#1a1a1a;font-weight:normal;font-family:'Liberation Sans',sans-serif;"><span style="font-size:12px;letter-spacing:0">控制台</span></div><svg style="position:absolute;left:446px;top:894.5px;" width="8" height="8" viewBox="0 0 8 8"><path d="M0.5 0.5 L7.5 7.5 M7.5 0.5 L0.5 7.5" stroke="#7a7a7a" stroke-width="1.2"/></svg><svg style="position:absolute;left:464px;top:892px;" width="13" height="11" viewBox="0 0 13 11"><rect x="0.5" y="0.5" width="12" height="10" fill="#fff" stroke="#6b88b0"/><path d="M0.5 3 H12.5 M5 3 V10.5" stroke="#6b88b0"/></svg><div id="t66" class="tx" style="left:480px;top:889.50px;line-height:17px;font-size:12px;color:#1a1a1a;font-weight:normal;font-family:'Liberation Sans',sans-serif;"><span style="font-size:12px;letter-spacing:0">属性</span></div><svg style="position:absolute;left:510px;top:891px;" width="13" height="13" viewBox="0 0 13 13"><rect x="0.5" y="0.5" width="10" height="12" fill="#f4f7fb" stroke="#9aa8b8"/><rect x="3" y="3" width="4" height="5" fill="#e04030"/><rect x="5" y="8" width="6" height="4" fill="#f2c24c"/></svg><div id="t67" class="tx" style="left:527px;top:889.50px;line-height:17px;font-size:12px;color:#1a1a1a;font-weight:normal;font-family:'Liberation Sans',sans-serif;"><span style="font-size:12px;letter-spacing:0">问题</span></div><div style="left:1637px;top:892px;width:9px;height:9px;background:#e8323c;"></div><svg style="position:absolute;left:1654px;top:891px;" width="12" height="11" viewBox="0 0 12 11"><path d="M1.5 1.5 L10.5 9.5 M10.5 1.5 L1.5 9.5" stroke="#9a9a9a" stroke-width="3"/></svg><svg style="position:absolute;left:1672px;top:891px;" width="13" height="12" viewBox="0 0 13 12"><path d="M1.5 1.5 L9.5 9.5 M9.5 1.5 L1.5 9.5" stroke="#b8b8b8" stroke-width="2.6"/><path d="M6 6 L12 12 M12 6 L6 12" stroke="#a8a8a8" stroke-width="2"/></svg><div style="left:1690px;top:891px;width:1px;height:14px;background:#c8c8c8;"></div><svg style="position:absolute;left:1697px;top:891px;" width="13" height="12" viewBox="0 0 13 12"><rect x="0.5" y="0.5" width="9" height="11" fill="#eef3fa" stroke="#8aa0c0"/><path d="M2 3 H8 M2 5 H8" stroke="#8aa0c0"/><path d="M8 8 L12 12 M12 8 L8 12" stroke="#666" stroke-width="1.3"/></svg><svg style="position:absolute;left:1715px;top:891px;" width="13" height="12" viewBox="0 0 13 12"><rect x="3.5" y="0.5" width="9" height="11" fill="#eef3fa" stroke="#8aa0c0"/><path d="M0.5 11.5 L3 5 L5.5 11.5Z" fill="#f2c24c" stroke="#b8862a" stroke-width="0.6"/></svg><svg style="position:absolute;left:1734px;top:891px;" width="13" height="12" viewBox="0 0 13 12"><rect x="0.5" y="0.5" width="11" height="11" fill="#f7f0dc" stroke="#c9a15a"/><path d="M4 10 L8 4 L10 6 L6 11Z" fill="#f3c56a" stroke="#b8862a" stroke-width="0.6"/></svg><div style="left:1749px;top:888px;width:38px;height:17px;background:#cce4f7;border:1px solid #99c9ef"></div><svg style="position:absolute;left:1752px;top:890px;" width="14" height="13" viewBox="0 0 14 13"><rect x="3.5" y="1.5" width="10" height="7" rx="1" fill="#eef3fa" stroke="#3a6fb0"/><path d="M1 6 V12 H6" stroke="#3a6fb0" stroke-width="1.3" fill="none"/></svg><svg style="position:absolute;left:1771px;top:890px;" width="14" height="13" viewBox="0 0 14 13"><rect x="3.5" y="1.5" width="10" height="7" rx="1" fill="#eef3fa" stroke="#3a6fb0"/><rect x="7" y="3" width="4" height="3" fill="#e04030"/><path d="M1 6 V12 H6" stroke="#3a6fb0" stroke-width="1.3" fill="none"/></svg><div style="left:1789px;top:891px;width:1px;height:14px;background:#c8c8c8;"></div><svg style="position:absolute;left:1795px;top:890px;" width="14" height="13" viewBox="0 0 14 13"><rect x="0.5" y="5.5" width="11" height="7" fill="#eef3fa" stroke="#3a6fb0"/><rect x="0.5" y="5.5" width="11" height="2" fill="#3a6fb0"/><path d="M5 6 L8 3 L13 0.5" stroke="#2e9b3a" stroke-width="2" fill="none"/></svg><svg style="position:absolute;left:1815px;top:891px;" width="12" height="11" viewBox="0 0 12 11"><rect x="0.5" y="0.5" width="11" height="8" rx="1" fill="#f4f4f4" stroke="#9a9a9a"/><rect x="3" y="9" width="6" height="1.5" fill="#9a9a9a"/></svg><svg style="position:absolute;left:1833px;top:895px;" width="8" height="4" viewBox="0 0 8 4"><path d="M0 0 H7 L3.5 3.8 Z" fill="#888"/></svg><svg style="position:absolute;left:1848px;top:890px;" width="14" height="13" viewBox="0 0 14 13"><rect x="0.5" y="3.5" width="11" height="9" fill="#fff" stroke="#6d8fb8"/><rect x="0.5" y="3.5" width="11" height="2.5" fill="#7fa6d6"/><path d="M11 0 L12 2 L14 3 L12 4 L11 6 L10 4 L8 3 L10 2Z" fill="#f5c242"/></svg><svg style="position:absolute;left:1867px;top:895px;" width="8" height="4" viewBox="0 0 8 4"><path d="M0 0 H7 L3.5 3.8 Z" fill="#000"/></svg><svg style="position:absolute;left:1883px;top:892px;" width="9" height="5" viewBox="0 0 9 5"><rect x="0.7" y="0.7" width="7.6" height="3" rx="0.6" fill="none" stroke="#444" stroke-width="1.3"/></svg><svg style="position:absolute;left:1901px;top:892px;" width="10" height="10" viewBox="0 0 10 10"><rect x="0.7" y="0.7" width="8.6" height="8.2" rx="0.6" fill="none" stroke="#444" stroke-width="1.3"/><path d="M0.8 1.9 H9.2" stroke="#444" stroke-width="1.6"/></svg><div id="t68" class="tx" style="left:386px;top:908.00px;line-height:17px;font-size:13px;color:#1a1a1a;font-weight:normal;font-family:'Liberation Sans',sans-serif;letter-spacing:0.028px;">Application [Java <span style="font-size:12px;letter-spacing:0">应用程序</span>] C:\Program Files\Java\jdk1.8.0_202\bin\javaw.exe  (2023<span style="font-size:12px;letter-spacing:0">年</span>12<span style="font-size:12px;letter-spacing:0">月</span>15<span style="font-size:12px;letter-spacing:0">日</span> <span style="font-size:12px;letter-spacing:0">下午</span>3:20:23)  [pid: 8692]</div><div style="left:384px;top:925px;width:1518px;height:36px;background:#ffffff;"></div><div style="left:384px;top:925px;width:1518px;height:36px;overflow:hidden"><div class="cd" style="left:3px;top:-0.80px;line-height:15.4px;width:1515px;overflow:hidden;color:#1a1a1a">2023-12-15 15:21:10.322  INFO [EOS-DEMO-SYS,EOS8-DEMO-LJ,default,DESKTOP-1KCKO9R:EOS8-DEMO-LJ:28085,,,,] 8692 --- [main] c.xxl.job.core.executor.XxlJobExecutor   : &gt;&gt;&gt;&gt;&gt;&gt;&gt;&gt;&gt;&gt;&gt; xxl-job register jobhandler success, name:demoJobHandler1</div><div class="cd" style="left:3px;top:14.55px;line-height:15.4px;width:1515px;overflow:hidden;color:#1a1a1a">2023-12-15 15:21:10.387  WARN [EOS-DEMO-SYS,EOS8-DEMO-LJ,default,DESKTOP-1KCKO9R:EOS8-DEMO-LJ:28085,,,,] 8692 --- [main] c.xxl.job.core.executor.XxlJobExecutor   : &gt;&gt;&gt;&gt;&gt;&gt;&gt;&gt;&gt;&gt;&gt; xxl-job accessToken is empty. To ensure system security</div><div class="cd" style="left:3px;top:29.90px;line-height:15.4px;width:1515px;overflow:hidden;color:#1a1a1a">2023-12-15 15:21:10.404  WARN [EOS-DEMO-SYS,EOS8-DEMO-LJ,default,DESKTOP-1KCKO9R:EOS8-DEMO-LJ:28085,,,,] 8692 --- [EOS-AFC-JOB-EXECUTOR-HEALTH-MONITOR] c.p.d.c.u.l.SDKLoadBalancerServerFilter : CurrentThread A</div></div><div style="left:1902px;top:925px;width:14px;height:36px;background:#f0f0f0;"></div><svg style="position:absolute;left:1905px;top:931px;" width="9" height="6" viewBox="0 0 9 6"><path d="M0.8 5 L4.5 1.3 L8.2 5" stroke="#606060" stroke-width="1.5" fill="none"/></svg><svg style="position:absolute;left:1905px;top:949px;" width="9" height="6" viewBox="0 0 9 6"><path d="M0.8 1 L4.5 4.7 L8.2 1" stroke="#606060" stroke-width="1.5" fill="none"/></svg><div style="left:384px;top:961px;width:1532px;height:15px;background:#f0f0f0;"></div><div style="left:402px;top:961px;width:184px;height:15px;background:#cdcdcd;"></div><svg style="position:absolute;left:390px;top:964px;" width="6" height="9" viewBox="0 0 6 9"><path d="M5 0.8 L1.3 4.5 L5 8.2" stroke="#606060" stroke-width="1.5" fill="none"/></svg><svg style="position:absolute;left:1889px;top:964px;" width="6" height="9" viewBox="0 0 6 9"><path d="M1 0.8 L4.7 4.5 L1 8.2" stroke="#606060" stroke-width="1.5" fill="none"/></svg><div id="t69" class="tx" style="left:1628px;top:905.00px;line-height:22px;font-size:20px;color:rgba(120,120,120,0.55);font-weight:normal;font-family:'Liberation Sans',sans-serif;letter-spacing:1.162px;"><span style="font-size:19px;letter-spacing:0">激活</span> Windows</div><div id="t70" class="tx" style="left:1628px;top:932.50px;line-height:16px;font-size:13px;color:rgba(120,120,120,0.5);font-weight:normal;font-family:'Liberation Sans',sans-serif;letter-spacing:1.839px;"><span style="font-size:13px;letter-spacing:0">转到</span>&quot;<span style="font-size:13px;letter-spacing:0">设置</span>&quot;<span style="font-size:13px;letter-spacing:0">以激活</span> Windows<span style="font-size:13px;letter-spacing:0">。</span></div><div style="left:0px;top:976px;width:1916px;height:20px;background:#f0f0f0;"></div><div style="left:0px;top:976px;width:1916px;height:1px;background:#e4e4e4;"></div><div style="left:1282px;top:978px;width:1px;height:16px;background:#d0d0d0;"></div><div id="t71" class="tx" style="left:1289px;top:977.50px;line-height:17px;font-size:12px;color:#1a1a1a;font-weight:normal;font-family:'Liberation Sans',sans-serif;"><span style="font-size:12px;letter-spacing:0">可写</span></div><div style="left:1405px;top:978px;width:1px;height:16px;background:#d0d0d0;"></div><div id="t72" class="tx" style="left:1411px;top:977.50px;line-height:17px;font-size:12px;color:#1a1a1a;font-weight:normal;font-family:'Liberation Sans',sans-serif;"><span style="font-size:12px;letter-spacing:0">智能插入</span></div><div style="left:1523px;top:978px;width:1px;height:16px;background:#d0d0d0;"></div><div id="t73" class="tx" style="left:1529.5px;top:977.50px;line-height:17px;font-size:13px;color:#1a1a1a;font-weight:normal;font-family:'Liberation Sans',sans-serif;letter-spacing:-0.172px;">36 : 31 [26]</div><svg style="position:absolute;left:1639px;top:980px;" width="2" height="12" viewBox="0 0 2 12"><rect x="0" y="0" width="1.2" height="1.2" fill="#a0a0a0"/><rect x="0" y="3" width="1.2" height="1.2" fill="#a0a0a0"/><rect x="0" y="6" width="1.2" height="1.2" fill="#a0a0a0"/><rect x="0" y="9" width="1.2" height="1.2" fill="#a0a0a0"/></svg><svg style="position:absolute;left:1896px;top:980px;" width="2" height="12" viewBox="0 0 2 12"><rect x="0" y="0" width="1.2" height="1.2" fill="#a0a0a0"/><rect x="0" y="3" width="1.2" height="1.2" fill="#a0a0a0"/><rect x="0" y="6" width="1.2" height="1.2" fill="#a0a0a0"/><rect x="0" y="9" width="1.2" height="1.2" fill="#a0a0a0"/></svg><svg style="position:absolute;left:1903px;top:978px;" width="10" height="15" viewBox="0 0 10 15"><path d="M5 0.5 A4.3 4.3 0 0 1 8 8 V10 H2 V8 A4.3 4.3 0 0 1 5 0.5Z" fill="#f7d55a" stroke="#d0a020" stroke-width="0.8"/><rect x="2.5" y="10.5" width="5" height="3" fill="#7a8a9a"/></svg><div style="left:384px;top:61px;width:1224px;height:821px;border:1px solid #e0e0e0;border-right:0;border-bottom:0;border-radius:2px 2px 0 0"></div><div style="left:384px;top:886px;width:1532px;height:90px;border:1px solid #e0e0e0;border-right:0;border-bottom:0;border-radius:2px 2px 0 0"></div><div style="left:1611px;top:61px;width:305px;height:821px;border:1px solid #e0e0e0;border-right:0;border-bottom:0;border-radius:2px 2px 0 0"></div><div style="left:379px;top:61px;width:1px;height:456px;background:#e6e6e6;"></div><div style="left:379px;top:521px;width:1px;height:455px;background:#e6e6e6;"></div></body></html>
